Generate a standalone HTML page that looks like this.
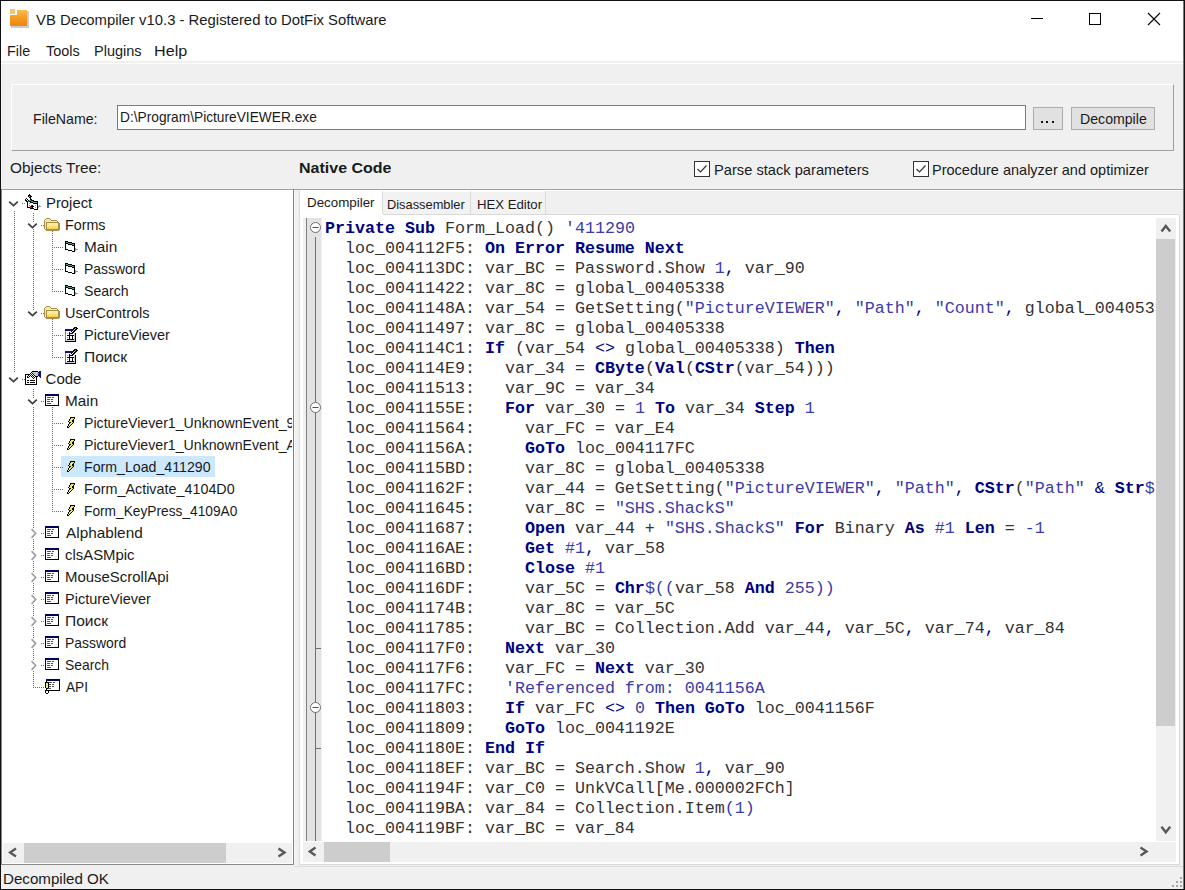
<!DOCTYPE html>
<html><head><meta charset="utf-8">
<style>
html,body{margin:0;padding:0;}
body{width:1185px;height:890px;position:relative;overflow:hidden;background:#f0f0f0;font-family:"Liberation Sans",sans-serif;}
.a{position:absolute;}
.t{position:absolute;white-space:pre;line-height:20px;color:#1a1a1a;transform-origin:0 0;}
#code{position:absolute;font-family:"Liberation Mono",monospace;font-size:16.67px;line-height:20px;white-space:pre;color:#333;}
#code b{color:#000080;}
#code i{font-style:normal;color:#3a3aa8;}
#code u{text-decoration:none;color:#000080;}
</style></head>
<body>
<div class="a" style="left:0;top:0;width:1185px;height:61px;background:#fff"></div>
<div class="a" style="left:0;top:63px;width:1185px;height:1px;background:#fff"></div>
<svg class="a" style="left:9px;top:8px" width="21" height="21" viewBox="0 0 21 21" shape-rendering="crispEdges">
<defs><linearGradient id="og" x1="0" y1="0" x2="0" y2="1"><stop offset="0" stop-color="#fbbd4e"/><stop offset="0.5" stop-color="#f69a22"/><stop offset="1" stop-color="#ee860e"/></linearGradient></defs>
<path d="M18 3 H20 V20 H2 V18 H18 Z" fill="#c9ccd4"/>
<rect x="1" y="1" width="5" height="5" fill="#f8c568"/>
<path d="M8 2 H18 V18 H1 V7 H8 Z" fill="url(#og)"/>
</svg>
<div class="t" style="left:35.70px;top:10px;font-size:15px;transform:scaleX(0.9895);">VB Decompiler v10.3 - Registered to DotFix Software</div>
<div class="a" style="left:1031px;top:18px;width:12px;height:1px;background:#000"></div>
<div class="a" style="left:1089px;top:13px;width:10px;height:10px;border:1px solid #000"></div>
<svg class="a" style="left:1147px;top:12px" width="14" height="14" viewBox="0 0 14 14"><path d="M1 1 L13 13 M13 1 L1 13" stroke="#000" stroke-width="1.1"/></svg>
<div class="t" style="left:7.44px;top:41px;font-size:15px;transform:scaleX(0.9565);">File</div>
<div class="t" style="left:45.60px;top:41px;font-size:15px;transform:scaleX(0.9629);">Tools</div>
<div class="t" style="left:93.53px;top:41px;font-size:15px;transform:scaleX(0.9667);">Plugins</div>
<div class="t" style="left:154.22px;top:41px;font-size:15px;transform:scaleX(1.0759);">Help</div>
<div class="a" style="left:11px;top:84px;width:1163px;height:67px;border-left:1px solid #fff;border-top:1px solid #fff;border-right:1px solid #a0a0a0;border-bottom:1px solid #a0a0a0;box-sizing:border-box"></div>
<div class="t" style="left:32.66px;top:109px;font-size:15px;transform:scaleX(0.9439);">FileName:</div>
<div class="a" style="left:117px;top:105px;width:909px;height:25px;background:#fff;border:1px solid #7a7a7a;box-sizing:border-box"></div>
<div class="t" style="left:119.99px;top:107px;font-size:15px;transform:scaleX(0.9150);">D:\Program\PictureVIEWER.exe</div>
<div class="a" style="left:1033px;top:107px;width:30px;height:23px;background:#e1e1e1;border:1px solid #adadad;box-sizing:border-box"></div>
<div class="a" style="left:1041px;top:121px;width:2px;height:2px;background:#111"></div>
<div class="a" style="left:1046px;top:121px;width:2px;height:2px;background:#111"></div>
<div class="a" style="left:1052px;top:121px;width:2px;height:2px;background:#111"></div>
<div class="a" style="left:1071px;top:107px;width:84px;height:23px;background:#e1e1e1;border:1px solid #adadad;box-sizing:border-box"></div>
<div class="t" style="left:1079.56px;top:109px;font-size:15px;transform:scaleX(0.9420);">Decompile</div>
<div class="t" style="left:10.48px;top:158px;font-size:15px;transform:scaleX(1.0241);">Objects Tree:</div>
<div class="t" style="left:298.53px;top:158px;font-size:15px;font-weight:bold;transform:scaleX(1.0671);">Native Code</div>
<div class="a" style="left:694px;top:161px;width:16px;height:16px;border:1px solid #333;box-sizing:border-box;background:#fff"></div>
<svg class="a" style="left:694px;top:161px" width="16" height="16"><path d="M3.5 8 L6.5 11 L12.5 4.5" stroke="#333" stroke-width="1.2" fill="none"/></svg>
<div class="t" style="left:713.52px;top:160px;font-size:15px;transform:scaleX(0.9777);">Parse stack parameters</div>
<div class="a" style="left:913px;top:161px;width:16px;height:16px;border:1px solid #333;box-sizing:border-box;background:#fff"></div>
<svg class="a" style="left:913px;top:161px" width="16" height="16"><path d="M3.5 8 L6.5 11 L12.5 4.5" stroke="#333" stroke-width="1.2" fill="none"/></svg>
<div class="t" style="left:932.43px;top:160px;font-size:15px;transform:scaleX(0.9668);">Procedure analyzer and optimizer</div>
<div class="a" style="left:1px;top:189px;width:1182px;height:1px;background:#a0a0a0"></div>
<div class="a" style="left:1px;top:190px;width:292px;height:674px;background:#fff"></div>
<div class="a" style="left:1px;top:189px;width:1px;height:676px;background:#858585"></div>
<div class="a" style="left:61px;top:456px;width:154px;height:21px;background:#cce8ff"></div>
<div class="a" style="left:14px;top:211px;width:1px;height:162px;background:repeating-linear-gradient(to bottom,#6a6a6a 0,#6a6a6a 1px,transparent 1px,transparent 2px)"></div>
<div class="a" style="left:33px;top:213px;width:1px;height:9px;background:repeating-linear-gradient(to bottom,#6a6a6a 0,#6a6a6a 1px,transparent 1px,transparent 2px)"></div>
<div class="a" style="left:33px;top:229px;width:1px;height:81px;background:repeating-linear-gradient(to bottom,#6a6a6a 0,#6a6a6a 1px,transparent 1px,transparent 2px)"></div>
<div class="a" style="left:33px;top:389px;width:1px;height:9px;background:repeating-linear-gradient(to bottom,#6a6a6a 0,#6a6a6a 1px,transparent 1px,transparent 2px)"></div>
<div class="a" style="left:33px;top:407px;width:1px;height:121px;background:repeating-linear-gradient(to bottom,#6a6a6a 0,#6a6a6a 1px,transparent 1px,transparent 2px)"></div>
<div class="a" style="left:33px;top:539px;width:1px;height:11px;background:repeating-linear-gradient(to bottom,#6a6a6a 0,#6a6a6a 1px,transparent 1px,transparent 2px)"></div>
<div class="a" style="left:33px;top:561px;width:1px;height:11px;background:repeating-linear-gradient(to bottom,#6a6a6a 0,#6a6a6a 1px,transparent 1px,transparent 2px)"></div>
<div class="a" style="left:33px;top:583px;width:1px;height:11px;background:repeating-linear-gradient(to bottom,#6a6a6a 0,#6a6a6a 1px,transparent 1px,transparent 2px)"></div>
<div class="a" style="left:33px;top:605px;width:1px;height:11px;background:repeating-linear-gradient(to bottom,#6a6a6a 0,#6a6a6a 1px,transparent 1px,transparent 2px)"></div>
<div class="a" style="left:33px;top:627px;width:1px;height:11px;background:repeating-linear-gradient(to bottom,#6a6a6a 0,#6a6a6a 1px,transparent 1px,transparent 2px)"></div>
<div class="a" style="left:33px;top:649px;width:1px;height:11px;background:repeating-linear-gradient(to bottom,#6a6a6a 0,#6a6a6a 1px,transparent 1px,transparent 2px)"></div>
<div class="a" style="left:33px;top:671px;width:1px;height:17px;background:repeating-linear-gradient(to bottom,#6a6a6a 0,#6a6a6a 1px,transparent 1px,transparent 2px)"></div>
<div class="a" style="left:52px;top:231px;width:1px;height:61px;background:repeating-linear-gradient(to bottom,#6a6a6a 0,#6a6a6a 1px,transparent 1px,transparent 2px)"></div>
<div class="a" style="left:52px;top:319px;width:1px;height:39px;background:repeating-linear-gradient(to bottom,#6a6a6a 0,#6a6a6a 1px,transparent 1px,transparent 2px)"></div>
<div class="a" style="left:52px;top:407px;width:1px;height:105px;background:repeating-linear-gradient(to bottom,#6a6a6a 0,#6a6a6a 1px,transparent 1px,transparent 2px)"></div>
<div class="a" style="left:22px;top:203px;height:1px;width:3px;background:repeating-linear-gradient(to right,#6a6a6a 0,#6a6a6a 1px,transparent 1px,transparent 2px)"></div>
<svg class="a" style="left:8px;top:200px" width="11" height="8"><path d="M1.2 1.6 L5.5 5.6 L9.8 1.6" stroke="#3c3c3c" stroke-width="1.7" fill="none"/></svg>
<svg class="a" style="left:24px;top:194px" width="17" height="16" shape-rendering="crispEdges"><rect x="5" y="0" width="1" height="1" fill="#000"/><rect x="4" y="1" width="3" height="1" fill="#000"/><rect x="4" y="2" width="1" height="1" fill="#000"/><rect x="5" y="2" width="1" height="1" fill="#5ab0b0"/><rect x="6" y="2" width="2" height="1" fill="#000"/><rect x="5" y="3" width="2" height="1" fill="#000"/><rect x="2" y="4" width="1" height="1" fill="#000"/><rect x="6" y="4" width="1" height="1" fill="#000"/><rect x="1" y="5" width="1" height="1" fill="#000"/><rect x="2" y="5" width="1" height="1" fill="#fff"/><rect x="3" y="5" width="1" height="1" fill="#000"/><rect x="6" y="5" width="2" height="1" fill="#000"/><rect x="1" y="6" width="2" height="1" fill="#000"/><rect x="3" y="6" width="1" height="1" fill="#fff"/><rect x="4" y="6" width="1" height="1" fill="#000"/><rect x="5" y="6" width="2" height="1" fill="#5ab0b0"/><rect x="7" y="6" width="3" height="1" fill="#000"/><rect x="2" y="7" width="2" height="1" fill="#000"/><rect x="4" y="7" width="1" height="1" fill="#5ab0b0"/><rect x="5" y="7" width="2" height="1" fill="#000"/><rect x="7" y="7" width="2" height="1" fill="#5ab0b0"/><rect x="9" y="7" width="5" height="1" fill="#000"/><rect x="3" y="8" width="1" height="1" fill="#000"/><rect x="4" y="8" width="2" height="1" fill="#fff"/><rect x="6" y="8" width="3" height="1" fill="#000"/><rect x="9" y="8" width="4" height="1" fill="#5ab0b0"/><rect x="13" y="8" width="1" height="1" fill="#000"/><rect x="0" y="9" width="1" height="1" fill="#8a9a9a"/><rect x="3" y="9" width="1" height="1" fill="#000"/><rect x="4" y="9" width="1" height="1" fill="#fff"/><rect x="5" y="9" width="1" height="1" fill="#8a9a9a"/><rect x="6" y="9" width="3" height="1" fill="#fff"/><rect x="9" y="9" width="5" height="1" fill="#000"/><rect x="3" y="10" width="1" height="1" fill="#000"/><rect x="4" y="10" width="9" height="1" fill="#fff"/><rect x="13" y="10" width="1" height="1" fill="#000"/><rect x="3" y="11" width="1" height="1" fill="#000"/><rect x="4" y="11" width="1" height="1" fill="#fff"/><rect x="5" y="11" width="1" height="1" fill="#8a9a9a"/><rect x="6" y="11" width="1" height="1" fill="#fff"/><rect x="7" y="11" width="1" height="1" fill="#a01828"/><rect x="8" y="11" width="1" height="1" fill="#000"/><rect x="9" y="11" width="2" height="1" fill="#fff"/><rect x="11" y="11" width="1" height="1" fill="#8a9a9a"/><rect x="12" y="11" width="1" height="1" fill="#fff"/><rect x="13" y="11" width="1" height="1" fill="#000"/><rect x="15" y="11" width="1" height="1" fill="#8a9a9a"/><rect x="3" y="12" width="1" height="1" fill="#000"/><rect x="4" y="12" width="2" height="1" fill="#fff"/><rect x="6" y="12" width="1" height="1" fill="#a01828"/><rect x="7" y="12" width="3" height="1" fill="#000"/><rect x="10" y="12" width="3" height="1" fill="#fff"/><rect x="13" y="12" width="1" height="1" fill="#000"/><rect x="14" y="12" width="3" height="1" fill="#8a9a9a"/><rect x="3" y="13" width="3" height="1" fill="#000"/><rect x="6" y="13" width="2" height="1" fill="#a01828"/><rect x="8" y="13" width="1" height="1" fill="#000"/><rect x="9" y="13" width="2" height="1" fill="#fff"/><rect x="11" y="13" width="1" height="1" fill="#8a9a9a"/><rect x="12" y="13" width="1" height="1" fill="#fff"/><rect x="13" y="13" width="1" height="1" fill="#000"/><rect x="14" y="13" width="1" height="1" fill="#8a9a9a"/><rect x="6" y="14" width="4" height="1" fill="#000"/><rect x="10" y="14" width="3" height="1" fill="#fff"/><rect x="13" y="14" width="1" height="1" fill="#000"/><rect x="10" y="15" width="4" height="1" fill="#000"/></svg>
<div class="t" style="left:45.51px;top:193px;font-size:15px;transform:scaleX(0.9891);">Project</div>
<div class="a" style="left:41px;top:225px;height:1px;width:3px;background:repeating-linear-gradient(to right,#6a6a6a 0,#6a6a6a 1px,transparent 1px,transparent 2px)"></div>
<svg class="a" style="left:27px;top:222px" width="11" height="8"><path d="M1.2 1.6 L5.5 5.6 L9.8 1.6" stroke="#3c3c3c" stroke-width="1.7" fill="none"/></svg>
<svg class="a" style="left:44px;top:218px" width="16" height="13" shape-rendering="crispEdges"><rect x="2" y="0" width="4" height="1" fill="#a89050"/><rect x="1" y="1" width="1" height="1" fill="#a89050"/><rect x="2" y="1" width="4" height="1" fill="#f7e7a0"/><rect x="6" y="1" width="1" height="1" fill="#a89050"/><rect x="0" y="2" width="1" height="1" fill="#a89050"/><rect x="1" y="2" width="6" height="1" fill="#f7e7a0"/><rect x="7" y="2" width="6" height="1" fill="#a89050"/><rect x="0" y="3" width="1" height="1" fill="#a89050"/><rect x="1" y="3" width="12" height="1" fill="#f7e7a0"/><rect x="13" y="3" width="1" height="1" fill="#a89050"/><rect x="0" y="4" width="1" height="1" fill="#a89050"/><rect x="1" y="4" width="1" height="1" fill="#f7e7a0"/><rect x="2" y="4" width="13" height="1" fill="#a89050"/><rect x="0" y="5" width="1" height="1" fill="#a89050"/><rect x="1" y="5" width="1" height="1" fill="#f7e7a0"/><rect x="2" y="5" width="1" height="1" fill="#a89050"/><rect x="3" y="5" width="11" height="1" fill="#fcec98"/><rect x="14" y="5" width="2" height="1" fill="#a89050"/><rect x="0" y="6" width="1" height="1" fill="#a89050"/><rect x="1" y="6" width="1" height="1" fill="#f7e7a0"/><rect x="2" y="6" width="1" height="1" fill="#a89050"/><rect x="3" y="6" width="11" height="1" fill="#fcec98"/><rect x="14" y="6" width="2" height="1" fill="#a89050"/><rect x="0" y="7" width="1" height="1" fill="#a89050"/><rect x="1" y="7" width="1" height="1" fill="#f7e7a0"/><rect x="2" y="7" width="1" height="1" fill="#a89050"/><rect x="3" y="7" width="11" height="1" fill="#fcec98"/><rect x="14" y="7" width="2" height="1" fill="#a89050"/><rect x="0" y="8" width="1" height="1" fill="#a89050"/><rect x="1" y="8" width="1" height="1" fill="#f7e7a0"/><rect x="2" y="8" width="1" height="1" fill="#a89050"/><rect x="3" y="8" width="11" height="1" fill="#f8de70"/><rect x="14" y="8" width="2" height="1" fill="#a89050"/><rect x="0" y="9" width="1" height="1" fill="#a89050"/><rect x="1" y="9" width="1" height="1" fill="#f7e7a0"/><rect x="2" y="9" width="1" height="1" fill="#a89050"/><rect x="3" y="9" width="11" height="1" fill="#f8de70"/><rect x="14" y="9" width="2" height="1" fill="#a89050"/><rect x="0" y="10" width="1" height="1" fill="#a89050"/><rect x="1" y="10" width="1" height="1" fill="#f7e7a0"/><rect x="2" y="10" width="1" height="1" fill="#a89050"/><rect x="3" y="10" width="11" height="1" fill="#f0cc50"/><rect x="14" y="10" width="2" height="1" fill="#a89050"/><rect x="1" y="11" width="15" height="1" fill="#a89050"/><rect x="2" y="12" width="13" height="1" fill="#a89050"/></svg>
<div class="t" style="left:64.75px;top:215px;font-size:15px;transform:scaleX(0.9537);">Forms</div>
<div class="a" style="left:54px;top:247px;height:1px;width:9px;background:repeating-linear-gradient(to right,#6a6a6a 0,#6a6a6a 1px,transparent 1px,transparent 2px)"></div>
<svg class="a" style="left:65px;top:241px" width="13" height="11" shape-rendering="crispEdges"><rect x="0" y="0" width="3" height="1" fill="#000"/><rect x="0" y="1" width="1" height="1" fill="#000"/><rect x="1" y="1" width="2" height="1" fill="#4a9a9a"/><rect x="3" y="1" width="4" height="1" fill="#000"/><rect x="0" y="2" width="3" height="1" fill="#000"/><rect x="3" y="2" width="4" height="1" fill="#4a9a9a"/><rect x="7" y="2" width="3" height="1" fill="#000"/><rect x="0" y="3" width="1" height="1" fill="#000"/><rect x="1" y="3" width="2" height="1" fill="#fff"/><rect x="3" y="3" width="4" height="1" fill="#000"/><rect x="7" y="3" width="2" height="1" fill="#4a9a9a"/><rect x="9" y="3" width="1" height="1" fill="#000"/><rect x="0" y="4" width="1" height="1" fill="#000"/><rect x="1" y="4" width="6" height="1" fill="#fff"/><rect x="7" y="4" width="3" height="1" fill="#000"/><rect x="0" y="5" width="1" height="1" fill="#000"/><rect x="1" y="5" width="8" height="1" fill="#fff"/><rect x="9" y="5" width="1" height="1" fill="#000"/><rect x="0" y="6" width="1" height="1" fill="#000"/><rect x="1" y="6" width="8" height="1" fill="#fff"/><rect x="9" y="6" width="1" height="1" fill="#000"/><rect x="0" y="7" width="1" height="1" fill="#000"/><rect x="1" y="7" width="8" height="1" fill="#fff"/><rect x="9" y="7" width="1" height="1" fill="#000"/><rect x="10" y="7" width="1" height="1" fill="#8a9a9a"/><rect x="0" y="8" width="3" height="1" fill="#000"/><rect x="3" y="8" width="6" height="1" fill="#fff"/><rect x="9" y="8" width="1" height="1" fill="#000"/><rect x="10" y="8" width="3" height="1" fill="#8a9a9a"/><rect x="3" y="9" width="4" height="1" fill="#000"/><rect x="7" y="9" width="2" height="1" fill="#fff"/><rect x="9" y="9" width="1" height="1" fill="#000"/><rect x="10" y="9" width="1" height="1" fill="#8a9a9a"/><rect x="7" y="10" width="3" height="1" fill="#000"/></svg>
<div class="t" style="left:83.58px;top:237px;font-size:15px;transform:scaleX(1.0226);">Main</div>
<div class="a" style="left:54px;top:269px;height:1px;width:9px;background:repeating-linear-gradient(to right,#6a6a6a 0,#6a6a6a 1px,transparent 1px,transparent 2px)"></div>
<svg class="a" style="left:65px;top:263px" width="13" height="11" shape-rendering="crispEdges"><rect x="0" y="0" width="3" height="1" fill="#000"/><rect x="0" y="1" width="1" height="1" fill="#000"/><rect x="1" y="1" width="2" height="1" fill="#4a9a9a"/><rect x="3" y="1" width="4" height="1" fill="#000"/><rect x="0" y="2" width="3" height="1" fill="#000"/><rect x="3" y="2" width="4" height="1" fill="#4a9a9a"/><rect x="7" y="2" width="3" height="1" fill="#000"/><rect x="0" y="3" width="1" height="1" fill="#000"/><rect x="1" y="3" width="2" height="1" fill="#fff"/><rect x="3" y="3" width="4" height="1" fill="#000"/><rect x="7" y="3" width="2" height="1" fill="#4a9a9a"/><rect x="9" y="3" width="1" height="1" fill="#000"/><rect x="0" y="4" width="1" height="1" fill="#000"/><rect x="1" y="4" width="6" height="1" fill="#fff"/><rect x="7" y="4" width="3" height="1" fill="#000"/><rect x="0" y="5" width="1" height="1" fill="#000"/><rect x="1" y="5" width="8" height="1" fill="#fff"/><rect x="9" y="5" width="1" height="1" fill="#000"/><rect x="0" y="6" width="1" height="1" fill="#000"/><rect x="1" y="6" width="8" height="1" fill="#fff"/><rect x="9" y="6" width="1" height="1" fill="#000"/><rect x="0" y="7" width="1" height="1" fill="#000"/><rect x="1" y="7" width="8" height="1" fill="#fff"/><rect x="9" y="7" width="1" height="1" fill="#000"/><rect x="10" y="7" width="1" height="1" fill="#8a9a9a"/><rect x="0" y="8" width="3" height="1" fill="#000"/><rect x="3" y="8" width="6" height="1" fill="#fff"/><rect x="9" y="8" width="1" height="1" fill="#000"/><rect x="10" y="8" width="3" height="1" fill="#8a9a9a"/><rect x="3" y="9" width="4" height="1" fill="#000"/><rect x="7" y="9" width="2" height="1" fill="#fff"/><rect x="9" y="9" width="1" height="1" fill="#000"/><rect x="10" y="9" width="1" height="1" fill="#8a9a9a"/><rect x="7" y="10" width="3" height="1" fill="#000"/></svg>
<div class="t" style="left:83.67px;top:259px;font-size:15px;transform:scaleX(0.9281);">Password</div>
<div class="a" style="left:54px;top:291px;height:1px;width:9px;background:repeating-linear-gradient(to right,#6a6a6a 0,#6a6a6a 1px,transparent 1px,transparent 2px)"></div>
<svg class="a" style="left:65px;top:285px" width="13" height="11" shape-rendering="crispEdges"><rect x="0" y="0" width="3" height="1" fill="#000"/><rect x="0" y="1" width="1" height="1" fill="#000"/><rect x="1" y="1" width="2" height="1" fill="#4a9a9a"/><rect x="3" y="1" width="4" height="1" fill="#000"/><rect x="0" y="2" width="3" height="1" fill="#000"/><rect x="3" y="2" width="4" height="1" fill="#4a9a9a"/><rect x="7" y="2" width="3" height="1" fill="#000"/><rect x="0" y="3" width="1" height="1" fill="#000"/><rect x="1" y="3" width="2" height="1" fill="#fff"/><rect x="3" y="3" width="4" height="1" fill="#000"/><rect x="7" y="3" width="2" height="1" fill="#4a9a9a"/><rect x="9" y="3" width="1" height="1" fill="#000"/><rect x="0" y="4" width="1" height="1" fill="#000"/><rect x="1" y="4" width="6" height="1" fill="#fff"/><rect x="7" y="4" width="3" height="1" fill="#000"/><rect x="0" y="5" width="1" height="1" fill="#000"/><rect x="1" y="5" width="8" height="1" fill="#fff"/><rect x="9" y="5" width="1" height="1" fill="#000"/><rect x="0" y="6" width="1" height="1" fill="#000"/><rect x="1" y="6" width="8" height="1" fill="#fff"/><rect x="9" y="6" width="1" height="1" fill="#000"/><rect x="0" y="7" width="1" height="1" fill="#000"/><rect x="1" y="7" width="8" height="1" fill="#fff"/><rect x="9" y="7" width="1" height="1" fill="#000"/><rect x="10" y="7" width="1" height="1" fill="#8a9a9a"/><rect x="0" y="8" width="3" height="1" fill="#000"/><rect x="3" y="8" width="6" height="1" fill="#fff"/><rect x="9" y="8" width="1" height="1" fill="#000"/><rect x="10" y="8" width="3" height="1" fill="#8a9a9a"/><rect x="3" y="9" width="4" height="1" fill="#000"/><rect x="7" y="9" width="2" height="1" fill="#fff"/><rect x="9" y="9" width="1" height="1" fill="#000"/><rect x="10" y="9" width="1" height="1" fill="#8a9a9a"/><rect x="7" y="10" width="3" height="1" fill="#000"/></svg>
<div class="t" style="left:83.66px;top:281px;font-size:15px;transform:scaleX(0.9391);">Search</div>
<div class="a" style="left:41px;top:313px;height:1px;width:3px;background:repeating-linear-gradient(to right,#6a6a6a 0,#6a6a6a 1px,transparent 1px,transparent 2px)"></div>
<svg class="a" style="left:27px;top:310px" width="11" height="8"><path d="M1.2 1.6 L5.5 5.6 L9.8 1.6" stroke="#3c3c3c" stroke-width="1.7" fill="none"/></svg>
<svg class="a" style="left:44px;top:306px" width="16" height="13" shape-rendering="crispEdges"><rect x="2" y="0" width="4" height="1" fill="#a89050"/><rect x="1" y="1" width="1" height="1" fill="#a89050"/><rect x="2" y="1" width="4" height="1" fill="#f7e7a0"/><rect x="6" y="1" width="1" height="1" fill="#a89050"/><rect x="0" y="2" width="1" height="1" fill="#a89050"/><rect x="1" y="2" width="6" height="1" fill="#f7e7a0"/><rect x="7" y="2" width="6" height="1" fill="#a89050"/><rect x="0" y="3" width="1" height="1" fill="#a89050"/><rect x="1" y="3" width="12" height="1" fill="#f7e7a0"/><rect x="13" y="3" width="1" height="1" fill="#a89050"/><rect x="0" y="4" width="1" height="1" fill="#a89050"/><rect x="1" y="4" width="1" height="1" fill="#f7e7a0"/><rect x="2" y="4" width="13" height="1" fill="#a89050"/><rect x="0" y="5" width="1" height="1" fill="#a89050"/><rect x="1" y="5" width="1" height="1" fill="#f7e7a0"/><rect x="2" y="5" width="1" height="1" fill="#a89050"/><rect x="3" y="5" width="11" height="1" fill="#fcec98"/><rect x="14" y="5" width="2" height="1" fill="#a89050"/><rect x="0" y="6" width="1" height="1" fill="#a89050"/><rect x="1" y="6" width="1" height="1" fill="#f7e7a0"/><rect x="2" y="6" width="1" height="1" fill="#a89050"/><rect x="3" y="6" width="11" height="1" fill="#fcec98"/><rect x="14" y="6" width="2" height="1" fill="#a89050"/><rect x="0" y="7" width="1" height="1" fill="#a89050"/><rect x="1" y="7" width="1" height="1" fill="#f7e7a0"/><rect x="2" y="7" width="1" height="1" fill="#a89050"/><rect x="3" y="7" width="11" height="1" fill="#fcec98"/><rect x="14" y="7" width="2" height="1" fill="#a89050"/><rect x="0" y="8" width="1" height="1" fill="#a89050"/><rect x="1" y="8" width="1" height="1" fill="#f7e7a0"/><rect x="2" y="8" width="1" height="1" fill="#a89050"/><rect x="3" y="8" width="11" height="1" fill="#f8de70"/><rect x="14" y="8" width="2" height="1" fill="#a89050"/><rect x="0" y="9" width="1" height="1" fill="#a89050"/><rect x="1" y="9" width="1" height="1" fill="#f7e7a0"/><rect x="2" y="9" width="1" height="1" fill="#a89050"/><rect x="3" y="9" width="11" height="1" fill="#f8de70"/><rect x="14" y="9" width="2" height="1" fill="#a89050"/><rect x="0" y="10" width="1" height="1" fill="#a89050"/><rect x="1" y="10" width="1" height="1" fill="#f7e7a0"/><rect x="2" y="10" width="1" height="1" fill="#a89050"/><rect x="3" y="10" width="11" height="1" fill="#f0cc50"/><rect x="14" y="10" width="2" height="1" fill="#a89050"/><rect x="1" y="11" width="15" height="1" fill="#a89050"/><rect x="2" y="12" width="13" height="1" fill="#a89050"/></svg>
<div class="t" style="left:64.73px;top:303px;font-size:15px;transform:scaleX(0.9651);">UserControls</div>
<div class="a" style="left:54px;top:335px;height:1px;width:9px;background:repeating-linear-gradient(to right,#6a6a6a 0,#6a6a6a 1px,transparent 1px,transparent 2px)"></div>
<svg class="a" style="left:65px;top:327px" width="13" height="15" shape-rendering="crispEdges"><rect x="9" y="0" width="3" height="1" fill="#000"/><rect x="8" y="1" width="2" height="1" fill="#000"/><rect x="10" y="1" width="1" height="1" fill="#999"/><rect x="11" y="1" width="2" height="1" fill="#000"/><rect x="0" y="2" width="8" height="1" fill="#10107a"/><rect x="8" y="2" width="1" height="1" fill="#000"/><rect x="9" y="2" width="1" height="1" fill="#e8e890"/><rect x="10" y="2" width="2" height="1" fill="#000"/><rect x="0" y="3" width="7" height="1" fill="#10107a"/><rect x="7" y="3" width="1" height="1" fill="#000"/><rect x="8" y="3" width="1" height="1" fill="#e8e890"/><rect x="9" y="3" width="2" height="1" fill="#000"/><rect x="0" y="4" width="1" height="1" fill="#7a7a9a"/><rect x="1" y="4" width="5" height="1" fill="#fff"/><rect x="6" y="4" width="1" height="1" fill="#000"/><rect x="7" y="4" width="1" height="1" fill="#e8e890"/><rect x="8" y="4" width="2" height="1" fill="#000"/><rect x="0" y="5" width="1" height="1" fill="#7a7a9a"/><rect x="1" y="5" width="3" height="1" fill="#fff"/><rect x="4" y="5" width="1" height="1" fill="#000"/><rect x="5" y="5" width="1" height="1" fill="#fff"/><rect x="6" y="5" width="1" height="1" fill="#e8e890"/><rect x="7" y="5" width="2" height="1" fill="#000"/><rect x="9" y="5" width="1" height="1" fill="#fff"/><rect x="0" y="6" width="1" height="1" fill="#7a7a9a"/><rect x="1" y="6" width="1" height="1" fill="#fff"/><rect x="2" y="6" width="1" height="1" fill="#999"/><rect x="3" y="6" width="1" height="1" fill="#fff"/><rect x="4" y="6" width="4" height="1" fill="#000"/><rect x="8" y="6" width="1" height="1" fill="#fff"/><rect x="9" y="6" width="1" height="1" fill="#d0d0d8"/><rect x="10" y="6" width="1" height="1" fill="#000"/><rect x="0" y="7" width="1" height="1" fill="#7a7a9a"/><rect x="1" y="7" width="3" height="1" fill="#fff"/><rect x="4" y="7" width="1" height="1" fill="#000"/><rect x="5" y="7" width="4" height="1" fill="#fff"/><rect x="9" y="7" width="1" height="1" fill="#d0d0d8"/><rect x="10" y="7" width="1" height="1" fill="#000"/><rect x="0" y="8" width="1" height="1" fill="#7a7a9a"/><rect x="1" y="8" width="1" height="1" fill="#fff"/><rect x="2" y="8" width="7" height="1" fill="#000"/><rect x="9" y="8" width="1" height="1" fill="#d0d0d8"/><rect x="10" y="8" width="1" height="1" fill="#000"/><rect x="0" y="9" width="1" height="1" fill="#7a7a9a"/><rect x="1" y="9" width="3" height="1" fill="#fff"/><rect x="4" y="9" width="1" height="1" fill="#000"/><rect x="5" y="9" width="2" height="1" fill="#fff"/><rect x="7" y="9" width="1" height="1" fill="#000"/><rect x="8" y="9" width="1" height="1" fill="#fff"/><rect x="9" y="9" width="1" height="1" fill="#d0d0d8"/><rect x="10" y="9" width="1" height="1" fill="#000"/><rect x="0" y="10" width="1" height="1" fill="#7a7a9a"/><rect x="1" y="10" width="1" height="1" fill="#fff"/><rect x="2" y="10" width="1" height="1" fill="#999"/><rect x="3" y="10" width="1" height="1" fill="#fff"/><rect x="4" y="10" width="1" height="1" fill="#000"/><rect x="5" y="10" width="2" height="1" fill="#fff"/><rect x="7" y="10" width="1" height="1" fill="#000"/><rect x="8" y="10" width="1" height="1" fill="#fff"/><rect x="9" y="10" width="1" height="1" fill="#d0d0d8"/><rect x="10" y="10" width="1" height="1" fill="#000"/><rect x="0" y="11" width="1" height="1" fill="#7a7a9a"/><rect x="1" y="11" width="3" height="1" fill="#fff"/><rect x="4" y="11" width="1" height="1" fill="#000"/><rect x="5" y="11" width="2" height="1" fill="#fff"/><rect x="7" y="11" width="1" height="1" fill="#000"/><rect x="8" y="11" width="1" height="1" fill="#fff"/><rect x="9" y="11" width="1" height="1" fill="#d0d0d8"/><rect x="10" y="11" width="1" height="1" fill="#000"/><rect x="0" y="12" width="1" height="1" fill="#7a7a9a"/><rect x="1" y="12" width="1" height="1" fill="#fff"/><rect x="2" y="12" width="7" height="1" fill="#000"/><rect x="9" y="12" width="1" height="1" fill="#d0d0d8"/><rect x="10" y="12" width="1" height="1" fill="#000"/><rect x="0" y="13" width="1" height="1" fill="#7a7a9a"/><rect x="1" y="13" width="9" height="1" fill="#d0d0d8"/><rect x="10" y="13" width="1" height="1" fill="#000"/><rect x="0" y="14" width="11" height="1" fill="#000"/></svg>
<div class="t" style="left:83.63px;top:325px;font-size:15px;transform:scaleX(0.9659);">PictureViever</div>
<div class="a" style="left:54px;top:357px;height:1px;width:9px;background:repeating-linear-gradient(to right,#6a6a6a 0,#6a6a6a 1px,transparent 1px,transparent 2px)"></div>
<svg class="a" style="left:65px;top:349px" width="13" height="15" shape-rendering="crispEdges"><rect x="9" y="0" width="3" height="1" fill="#000"/><rect x="8" y="1" width="2" height="1" fill="#000"/><rect x="10" y="1" width="1" height="1" fill="#999"/><rect x="11" y="1" width="2" height="1" fill="#000"/><rect x="0" y="2" width="8" height="1" fill="#10107a"/><rect x="8" y="2" width="1" height="1" fill="#000"/><rect x="9" y="2" width="1" height="1" fill="#e8e890"/><rect x="10" y="2" width="2" height="1" fill="#000"/><rect x="0" y="3" width="7" height="1" fill="#10107a"/><rect x="7" y="3" width="1" height="1" fill="#000"/><rect x="8" y="3" width="1" height="1" fill="#e8e890"/><rect x="9" y="3" width="2" height="1" fill="#000"/><rect x="0" y="4" width="1" height="1" fill="#7a7a9a"/><rect x="1" y="4" width="5" height="1" fill="#fff"/><rect x="6" y="4" width="1" height="1" fill="#000"/><rect x="7" y="4" width="1" height="1" fill="#e8e890"/><rect x="8" y="4" width="2" height="1" fill="#000"/><rect x="0" y="5" width="1" height="1" fill="#7a7a9a"/><rect x="1" y="5" width="3" height="1" fill="#fff"/><rect x="4" y="5" width="1" height="1" fill="#000"/><rect x="5" y="5" width="1" height="1" fill="#fff"/><rect x="6" y="5" width="1" height="1" fill="#e8e890"/><rect x="7" y="5" width="2" height="1" fill="#000"/><rect x="9" y="5" width="1" height="1" fill="#fff"/><rect x="0" y="6" width="1" height="1" fill="#7a7a9a"/><rect x="1" y="6" width="1" height="1" fill="#fff"/><rect x="2" y="6" width="1" height="1" fill="#999"/><rect x="3" y="6" width="1" height="1" fill="#fff"/><rect x="4" y="6" width="4" height="1" fill="#000"/><rect x="8" y="6" width="1" height="1" fill="#fff"/><rect x="9" y="6" width="1" height="1" fill="#d0d0d8"/><rect x="10" y="6" width="1" height="1" fill="#000"/><rect x="0" y="7" width="1" height="1" fill="#7a7a9a"/><rect x="1" y="7" width="3" height="1" fill="#fff"/><rect x="4" y="7" width="1" height="1" fill="#000"/><rect x="5" y="7" width="4" height="1" fill="#fff"/><rect x="9" y="7" width="1" height="1" fill="#d0d0d8"/><rect x="10" y="7" width="1" height="1" fill="#000"/><rect x="0" y="8" width="1" height="1" fill="#7a7a9a"/><rect x="1" y="8" width="1" height="1" fill="#fff"/><rect x="2" y="8" width="7" height="1" fill="#000"/><rect x="9" y="8" width="1" height="1" fill="#d0d0d8"/><rect x="10" y="8" width="1" height="1" fill="#000"/><rect x="0" y="9" width="1" height="1" fill="#7a7a9a"/><rect x="1" y="9" width="3" height="1" fill="#fff"/><rect x="4" y="9" width="1" height="1" fill="#000"/><rect x="5" y="9" width="2" height="1" fill="#fff"/><rect x="7" y="9" width="1" height="1" fill="#000"/><rect x="8" y="9" width="1" height="1" fill="#fff"/><rect x="9" y="9" width="1" height="1" fill="#d0d0d8"/><rect x="10" y="9" width="1" height="1" fill="#000"/><rect x="0" y="10" width="1" height="1" fill="#7a7a9a"/><rect x="1" y="10" width="1" height="1" fill="#fff"/><rect x="2" y="10" width="1" height="1" fill="#999"/><rect x="3" y="10" width="1" height="1" fill="#fff"/><rect x="4" y="10" width="1" height="1" fill="#000"/><rect x="5" y="10" width="2" height="1" fill="#fff"/><rect x="7" y="10" width="1" height="1" fill="#000"/><rect x="8" y="10" width="1" height="1" fill="#fff"/><rect x="9" y="10" width="1" height="1" fill="#d0d0d8"/><rect x="10" y="10" width="1" height="1" fill="#000"/><rect x="0" y="11" width="1" height="1" fill="#7a7a9a"/><rect x="1" y="11" width="3" height="1" fill="#fff"/><rect x="4" y="11" width="1" height="1" fill="#000"/><rect x="5" y="11" width="2" height="1" fill="#fff"/><rect x="7" y="11" width="1" height="1" fill="#000"/><rect x="8" y="11" width="1" height="1" fill="#fff"/><rect x="9" y="11" width="1" height="1" fill="#d0d0d8"/><rect x="10" y="11" width="1" height="1" fill="#000"/><rect x="0" y="12" width="1" height="1" fill="#7a7a9a"/><rect x="1" y="12" width="1" height="1" fill="#fff"/><rect x="2" y="12" width="7" height="1" fill="#000"/><rect x="9" y="12" width="1" height="1" fill="#d0d0d8"/><rect x="10" y="12" width="1" height="1" fill="#000"/><rect x="0" y="13" width="1" height="1" fill="#7a7a9a"/><rect x="1" y="13" width="9" height="1" fill="#d0d0d8"/><rect x="10" y="13" width="1" height="1" fill="#000"/><rect x="0" y="14" width="11" height="1" fill="#000"/></svg>
<div class="t" style="left:83.56px;top:347px;font-size:15px;transform:scaleX(1.0366);">Поиск</div>
<div class="a" style="left:22px;top:379px;height:1px;width:3px;background:repeating-linear-gradient(to right,#6a6a6a 0,#6a6a6a 1px,transparent 1px,transparent 2px)"></div>
<svg class="a" style="left:8px;top:376px" width="11" height="8"><path d="M1.2 1.6 L5.5 5.6 L9.8 1.6" stroke="#3c3c3c" stroke-width="1.7" fill="none"/></svg>
<svg class="a" style="left:25px;top:371px" width="16" height="14" shape-rendering="crispEdges"><rect x="7" y="0" width="6" height="1" fill="#000"/><rect x="14" y="0" width="2" height="1" fill="#10106a"/><rect x="6" y="1" width="1" height="1" fill="#000"/><rect x="7" y="1" width="6" height="1" fill="#c4c8c4"/><rect x="13" y="1" width="3" height="1" fill="#10106a"/><rect x="5" y="2" width="1" height="1" fill="#000"/><rect x="6" y="2" width="1" height="1" fill="#fff"/><rect x="7" y="2" width="1" height="1" fill="#000"/><rect x="8" y="2" width="5" height="1" fill="#c4c8c4"/><rect x="13" y="2" width="1" height="1" fill="#7070b0"/><rect x="14" y="2" width="2" height="1" fill="#10106a"/><rect x="0" y="3" width="5" height="1" fill="#000"/><rect x="5" y="3" width="1" height="1" fill="#fff"/><rect x="6" y="3" width="1" height="1" fill="#000"/><rect x="7" y="3" width="1" height="1" fill="#fff"/><rect x="8" y="3" width="1" height="1" fill="#000"/><rect x="9" y="3" width="4" height="1" fill="#c4c8c4"/><rect x="13" y="3" width="3" height="1" fill="#10106a"/><rect x="0" y="4" width="1" height="1" fill="#000"/><rect x="1" y="4" width="2" height="1" fill="#fff"/><rect x="3" y="4" width="1" height="1" fill="#000"/><rect x="4" y="4" width="1" height="1" fill="#fff"/><rect x="5" y="4" width="1" height="1" fill="#000"/><rect x="6" y="4" width="1" height="1" fill="#fff"/><rect x="7" y="4" width="1" height="1" fill="#000"/><rect x="8" y="4" width="1" height="1" fill="#fff"/><rect x="9" y="4" width="1" height="1" fill="#000"/><rect x="10" y="4" width="3" height="1" fill="#c4c8c4"/><rect x="13" y="4" width="3" height="1" fill="#10106a"/><rect x="0" y="5" width="1" height="1" fill="#000"/><rect x="1" y="5" width="1" height="1" fill="#fff"/><rect x="2" y="5" width="1" height="1" fill="#000"/><rect x="3" y="5" width="1" height="1" fill="#fff"/><rect x="4" y="5" width="1" height="1" fill="#000"/><rect x="5" y="5" width="1" height="1" fill="#fff"/><rect x="6" y="5" width="1" height="1" fill="#000"/><rect x="7" y="5" width="1" height="1" fill="#fff"/><rect x="8" y="5" width="1" height="1" fill="#000"/><rect x="9" y="5" width="1" height="1" fill="#fff"/><rect x="10" y="5" width="3" height="1" fill="#000"/><rect x="14" y="5" width="2" height="1" fill="#10106a"/><rect x="0" y="6" width="1" height="1" fill="#000"/><rect x="1" y="6" width="1" height="1" fill="#fff"/><rect x="2" y="6" width="2" height="1" fill="#000"/><rect x="4" y="6" width="3" height="1" fill="#fff"/><rect x="7" y="6" width="1" height="1" fill="#000"/><rect x="8" y="6" width="1" height="1" fill="#fff"/><rect x="9" y="6" width="1" height="1" fill="#000"/><rect x="10" y="6" width="1" height="1" fill="#fff"/><rect x="11" y="6" width="1" height="1" fill="#000"/><rect x="15" y="6" width="1" height="1" fill="#10106a"/><rect x="0" y="7" width="1" height="1" fill="#000"/><rect x="1" y="7" width="7" height="1" fill="#fff"/><rect x="8" y="7" width="1" height="1" fill="#000"/><rect x="9" y="7" width="2" height="1" fill="#fff"/><rect x="11" y="7" width="1" height="1" fill="#000"/><rect x="0" y="8" width="1" height="1" fill="#000"/><rect x="1" y="8" width="10" height="1" fill="#fff"/><rect x="11" y="8" width="1" height="1" fill="#000"/><rect x="0" y="9" width="1" height="1" fill="#000"/><rect x="1" y="9" width="1" height="1" fill="#fff"/><rect x="2" y="9" width="2" height="1" fill="#000"/><rect x="4" y="9" width="1" height="1" fill="#fff"/><rect x="5" y="9" width="5" height="1" fill="#000"/><rect x="10" y="9" width="1" height="1" fill="#fff"/><rect x="11" y="9" width="1" height="1" fill="#000"/><rect x="0" y="10" width="1" height="1" fill="#000"/><rect x="1" y="10" width="10" height="1" fill="#fff"/><rect x="11" y="10" width="1" height="1" fill="#000"/><rect x="0" y="11" width="1" height="1" fill="#000"/><rect x="1" y="11" width="1" height="1" fill="#fff"/><rect x="2" y="11" width="2" height="1" fill="#000"/><rect x="4" y="11" width="1" height="1" fill="#fff"/><rect x="5" y="11" width="5" height="1" fill="#000"/><rect x="10" y="11" width="1" height="1" fill="#fff"/><rect x="11" y="11" width="1" height="1" fill="#000"/><rect x="0" y="12" width="1" height="1" fill="#000"/><rect x="1" y="12" width="10" height="1" fill="#fff"/><rect x="11" y="12" width="1" height="1" fill="#000"/><rect x="0" y="13" width="12" height="1" fill="#000"/></svg>
<div class="t" style="left:45.60px;top:369px;font-size:15px;">Code</div>
<div class="a" style="left:41px;top:401px;height:1px;width:3px;background:repeating-linear-gradient(to right,#6a6a6a 0,#6a6a6a 1px,transparent 1px,transparent 2px)"></div>
<svg class="a" style="left:27px;top:398px" width="11" height="8"><path d="M1.2 1.6 L5.5 5.6 L9.8 1.6" stroke="#3c3c3c" stroke-width="1.7" fill="none"/></svg>
<svg class="a" style="left:45px;top:394px" width="14" height="12" shape-rendering="crispEdges"><rect x="0" y="0" width="14" height="1" fill="#00005a"/><rect x="0" y="1" width="14" height="1" fill="#00005a"/><rect x="0" y="2" width="1" height="1" fill="#000"/><rect x="1" y="2" width="12" height="1" fill="#fff"/><rect x="13" y="2" width="1" height="1" fill="#000"/><rect x="0" y="3" width="1" height="1" fill="#000"/><rect x="1" y="3" width="1" height="1" fill="#fff"/><rect x="2" y="3" width="4" height="1" fill="#505050"/><rect x="6" y="3" width="1" height="1" fill="#fff"/><rect x="7" y="3" width="2" height="1" fill="#505050"/><rect x="9" y="3" width="4" height="1" fill="#fff"/><rect x="13" y="3" width="1" height="1" fill="#000"/><rect x="0" y="4" width="1" height="1" fill="#000"/><rect x="1" y="4" width="12" height="1" fill="#fff"/><rect x="13" y="4" width="1" height="1" fill="#000"/><rect x="0" y="5" width="1" height="1" fill="#000"/><rect x="1" y="5" width="1" height="1" fill="#fff"/><rect x="2" y="5" width="3" height="1" fill="#505050"/><rect x="5" y="5" width="1" height="1" fill="#fff"/><rect x="6" y="5" width="2" height="1" fill="#505050"/><rect x="8" y="5" width="5" height="1" fill="#fff"/><rect x="13" y="5" width="1" height="1" fill="#000"/><rect x="0" y="6" width="1" height="1" fill="#000"/><rect x="1" y="6" width="12" height="1" fill="#fff"/><rect x="13" y="6" width="1" height="1" fill="#000"/><rect x="0" y="7" width="1" height="1" fill="#000"/><rect x="1" y="7" width="1" height="1" fill="#fff"/><rect x="2" y="7" width="3" height="1" fill="#505050"/><rect x="5" y="7" width="1" height="1" fill="#fff"/><rect x="6" y="7" width="2" height="1" fill="#505050"/><rect x="8" y="7" width="5" height="1" fill="#fff"/><rect x="13" y="7" width="1" height="1" fill="#000"/><rect x="0" y="8" width="1" height="1" fill="#000"/><rect x="1" y="8" width="12" height="1" fill="#fff"/><rect x="13" y="8" width="1" height="1" fill="#000"/><rect x="0" y="9" width="1" height="1" fill="#000"/><rect x="1" y="9" width="1" height="1" fill="#fff"/><rect x="2" y="9" width="4" height="1" fill="#505050"/><rect x="6" y="9" width="7" height="1" fill="#fff"/><rect x="13" y="9" width="1" height="1" fill="#000"/><rect x="0" y="10" width="1" height="1" fill="#000"/><rect x="1" y="10" width="12" height="1" fill="#fff"/><rect x="13" y="10" width="1" height="1" fill="#000"/><rect x="0" y="11" width="14" height="1" fill="#000"/></svg>
<div class="t" style="left:64.88px;top:391px;font-size:15px;transform:scaleX(1.0194);">Main</div>
<div class="a" style="left:54px;top:423px;height:1px;width:9px;background:repeating-linear-gradient(to right,#6a6a6a 0,#6a6a6a 1px,transparent 1px,transparent 2px)"></div>
<svg class="a" style="left:67px;top:417px" width="8" height="11" shape-rendering="crispEdges"><rect x="3" y="0" width="5" height="1" fill="#000"/><rect x="3" y="1" width="1" height="1" fill="#000"/><rect x="4" y="1" width="3" height="1" fill="#f2f048"/><rect x="7" y="1" width="1" height="1" fill="#000"/><rect x="2" y="2" width="1" height="1" fill="#000"/><rect x="3" y="2" width="3" height="1" fill="#f2f048"/><rect x="6" y="2" width="1" height="1" fill="#000"/><rect x="2" y="3" width="1" height="1" fill="#000"/><rect x="3" y="3" width="2" height="1" fill="#f2f048"/><rect x="5" y="3" width="2" height="1" fill="#000"/><rect x="1" y="4" width="1" height="1" fill="#000"/><rect x="2" y="4" width="3" height="1" fill="#f2f048"/><rect x="5" y="4" width="2" height="1" fill="#000"/><rect x="2" y="5" width="2" height="1" fill="#000"/><rect x="4" y="5" width="2" height="1" fill="#f2f048"/><rect x="6" y="5" width="1" height="1" fill="#000"/><rect x="2" y="6" width="1" height="1" fill="#000"/><rect x="3" y="6" width="2" height="1" fill="#f2f048"/><rect x="5" y="6" width="1" height="1" fill="#000"/><rect x="1" y="7" width="1" height="1" fill="#000"/><rect x="2" y="7" width="2" height="1" fill="#f2f048"/><rect x="4" y="7" width="1" height="1" fill="#000"/><rect x="1" y="8" width="1" height="1" fill="#000"/><rect x="2" y="8" width="1" height="1" fill="#f6f6b0"/><rect x="3" y="8" width="1" height="1" fill="#000"/><rect x="0" y="9" width="1" height="1" fill="#000"/><rect x="1" y="9" width="1" height="1" fill="#f6f6b0"/><rect x="2" y="9" width="1" height="1" fill="#000"/><rect x="0" y="10" width="2" height="1" fill="#000"/></svg>
<div class="t" style="left:84.06px;top:413px;font-size:15px;transform:scaleX(0.9430);">PictureViever1_UnknownEvent_9</div>
<div class="a" style="left:54px;top:445px;height:1px;width:9px;background:repeating-linear-gradient(to right,#6a6a6a 0,#6a6a6a 1px,transparent 1px,transparent 2px)"></div>
<svg class="a" style="left:67px;top:439px" width="8" height="11" shape-rendering="crispEdges"><rect x="3" y="0" width="5" height="1" fill="#000"/><rect x="3" y="1" width="1" height="1" fill="#000"/><rect x="4" y="1" width="3" height="1" fill="#f2f048"/><rect x="7" y="1" width="1" height="1" fill="#000"/><rect x="2" y="2" width="1" height="1" fill="#000"/><rect x="3" y="2" width="3" height="1" fill="#f2f048"/><rect x="6" y="2" width="1" height="1" fill="#000"/><rect x="2" y="3" width="1" height="1" fill="#000"/><rect x="3" y="3" width="2" height="1" fill="#f2f048"/><rect x="5" y="3" width="2" height="1" fill="#000"/><rect x="1" y="4" width="1" height="1" fill="#000"/><rect x="2" y="4" width="3" height="1" fill="#f2f048"/><rect x="5" y="4" width="2" height="1" fill="#000"/><rect x="2" y="5" width="2" height="1" fill="#000"/><rect x="4" y="5" width="2" height="1" fill="#f2f048"/><rect x="6" y="5" width="1" height="1" fill="#000"/><rect x="2" y="6" width="1" height="1" fill="#000"/><rect x="3" y="6" width="2" height="1" fill="#f2f048"/><rect x="5" y="6" width="1" height="1" fill="#000"/><rect x="1" y="7" width="1" height="1" fill="#000"/><rect x="2" y="7" width="2" height="1" fill="#f2f048"/><rect x="4" y="7" width="1" height="1" fill="#000"/><rect x="1" y="8" width="1" height="1" fill="#000"/><rect x="2" y="8" width="1" height="1" fill="#f6f6b0"/><rect x="3" y="8" width="1" height="1" fill="#000"/><rect x="0" y="9" width="1" height="1" fill="#000"/><rect x="1" y="9" width="1" height="1" fill="#f6f6b0"/><rect x="2" y="9" width="1" height="1" fill="#000"/><rect x="0" y="10" width="2" height="1" fill="#000"/></svg>
<div class="t" style="left:84.06px;top:435px;font-size:15px;transform:scaleX(0.9430);">PictureViever1_UnknownEvent_A</div>
<div class="a" style="left:54px;top:467px;height:1px;width:9px;background:repeating-linear-gradient(to right,#6a6a6a 0,#6a6a6a 1px,transparent 1px,transparent 2px)"></div>
<svg class="a" style="left:67px;top:461px" width="8" height="11" shape-rendering="crispEdges"><rect x="3" y="0" width="5" height="1" fill="#000"/><rect x="3" y="1" width="1" height="1" fill="#000"/><rect x="4" y="1" width="3" height="1" fill="#f2f048"/><rect x="7" y="1" width="1" height="1" fill="#000"/><rect x="2" y="2" width="1" height="1" fill="#000"/><rect x="3" y="2" width="3" height="1" fill="#f2f048"/><rect x="6" y="2" width="1" height="1" fill="#000"/><rect x="2" y="3" width="1" height="1" fill="#000"/><rect x="3" y="3" width="2" height="1" fill="#f2f048"/><rect x="5" y="3" width="2" height="1" fill="#000"/><rect x="1" y="4" width="1" height="1" fill="#000"/><rect x="2" y="4" width="3" height="1" fill="#f2f048"/><rect x="5" y="4" width="2" height="1" fill="#000"/><rect x="2" y="5" width="2" height="1" fill="#000"/><rect x="4" y="5" width="2" height="1" fill="#f2f048"/><rect x="6" y="5" width="1" height="1" fill="#000"/><rect x="2" y="6" width="1" height="1" fill="#000"/><rect x="3" y="6" width="2" height="1" fill="#f2f048"/><rect x="5" y="6" width="1" height="1" fill="#000"/><rect x="1" y="7" width="1" height="1" fill="#000"/><rect x="2" y="7" width="2" height="1" fill="#f2f048"/><rect x="4" y="7" width="1" height="1" fill="#000"/><rect x="1" y="8" width="1" height="1" fill="#000"/><rect x="2" y="8" width="1" height="1" fill="#f6f6b0"/><rect x="3" y="8" width="1" height="1" fill="#000"/><rect x="0" y="9" width="1" height="1" fill="#000"/><rect x="1" y="9" width="1" height="1" fill="#f6f6b0"/><rect x="2" y="9" width="1" height="1" fill="#000"/><rect x="0" y="10" width="2" height="1" fill="#000"/></svg>
<div class="t" style="left:83.76px;top:457px;font-size:15px;transform:scaleX(0.9444);">Form_Load_411290</div>
<div class="a" style="left:54px;top:489px;height:1px;width:9px;background:repeating-linear-gradient(to right,#6a6a6a 0,#6a6a6a 1px,transparent 1px,transparent 2px)"></div>
<svg class="a" style="left:67px;top:483px" width="8" height="11" shape-rendering="crispEdges"><rect x="3" y="0" width="5" height="1" fill="#000"/><rect x="3" y="1" width="1" height="1" fill="#000"/><rect x="4" y="1" width="3" height="1" fill="#f2f048"/><rect x="7" y="1" width="1" height="1" fill="#000"/><rect x="2" y="2" width="1" height="1" fill="#000"/><rect x="3" y="2" width="3" height="1" fill="#f2f048"/><rect x="6" y="2" width="1" height="1" fill="#000"/><rect x="2" y="3" width="1" height="1" fill="#000"/><rect x="3" y="3" width="2" height="1" fill="#f2f048"/><rect x="5" y="3" width="2" height="1" fill="#000"/><rect x="1" y="4" width="1" height="1" fill="#000"/><rect x="2" y="4" width="3" height="1" fill="#f2f048"/><rect x="5" y="4" width="2" height="1" fill="#000"/><rect x="2" y="5" width="2" height="1" fill="#000"/><rect x="4" y="5" width="2" height="1" fill="#f2f048"/><rect x="6" y="5" width="1" height="1" fill="#000"/><rect x="2" y="6" width="1" height="1" fill="#000"/><rect x="3" y="6" width="2" height="1" fill="#f2f048"/><rect x="5" y="6" width="1" height="1" fill="#000"/><rect x="1" y="7" width="1" height="1" fill="#000"/><rect x="2" y="7" width="2" height="1" fill="#f2f048"/><rect x="4" y="7" width="1" height="1" fill="#000"/><rect x="1" y="8" width="1" height="1" fill="#000"/><rect x="2" y="8" width="1" height="1" fill="#f6f6b0"/><rect x="3" y="8" width="1" height="1" fill="#000"/><rect x="0" y="9" width="1" height="1" fill="#000"/><rect x="1" y="9" width="1" height="1" fill="#f6f6b0"/><rect x="2" y="9" width="1" height="1" fill="#000"/><rect x="0" y="10" width="2" height="1" fill="#000"/></svg>
<div class="t" style="left:83.74px;top:479px;font-size:15px;transform:scaleX(0.9564);">Form_Activate_4104D0</div>
<div class="a" style="left:54px;top:511px;height:1px;width:9px;background:repeating-linear-gradient(to right,#6a6a6a 0,#6a6a6a 1px,transparent 1px,transparent 2px)"></div>
<svg class="a" style="left:67px;top:505px" width="8" height="11" shape-rendering="crispEdges"><rect x="3" y="0" width="5" height="1" fill="#000"/><rect x="3" y="1" width="1" height="1" fill="#000"/><rect x="4" y="1" width="3" height="1" fill="#f2f048"/><rect x="7" y="1" width="1" height="1" fill="#000"/><rect x="2" y="2" width="1" height="1" fill="#000"/><rect x="3" y="2" width="3" height="1" fill="#f2f048"/><rect x="6" y="2" width="1" height="1" fill="#000"/><rect x="2" y="3" width="1" height="1" fill="#000"/><rect x="3" y="3" width="2" height="1" fill="#f2f048"/><rect x="5" y="3" width="2" height="1" fill="#000"/><rect x="1" y="4" width="1" height="1" fill="#000"/><rect x="2" y="4" width="3" height="1" fill="#f2f048"/><rect x="5" y="4" width="2" height="1" fill="#000"/><rect x="2" y="5" width="2" height="1" fill="#000"/><rect x="4" y="5" width="2" height="1" fill="#f2f048"/><rect x="6" y="5" width="1" height="1" fill="#000"/><rect x="2" y="6" width="1" height="1" fill="#000"/><rect x="3" y="6" width="2" height="1" fill="#f2f048"/><rect x="5" y="6" width="1" height="1" fill="#000"/><rect x="1" y="7" width="1" height="1" fill="#000"/><rect x="2" y="7" width="2" height="1" fill="#f2f048"/><rect x="4" y="7" width="1" height="1" fill="#000"/><rect x="1" y="8" width="1" height="1" fill="#000"/><rect x="2" y="8" width="1" height="1" fill="#f6f6b0"/><rect x="3" y="8" width="1" height="1" fill="#000"/><rect x="0" y="9" width="1" height="1" fill="#000"/><rect x="1" y="9" width="1" height="1" fill="#f6f6b0"/><rect x="2" y="9" width="1" height="1" fill="#000"/><rect x="0" y="10" width="2" height="1" fill="#000"/></svg>
<div class="t" style="left:83.78px;top:501px;font-size:15px;transform:scaleX(0.9151);">Form_KeyPress_4109A0</div>
<div class="a" style="left:41px;top:533px;height:1px;width:3px;background:repeating-linear-gradient(to right,#6a6a6a 0,#6a6a6a 1px,transparent 1px,transparent 2px)"></div>
<svg class="a" style="left:30px;top:528px" width="8" height="11"><path d="M1.6 1.2 L5.6 5.5 L1.6 9.8" stroke="#a0a0a0" stroke-width="1.7" fill="none"/></svg>
<svg class="a" style="left:45px;top:526px" width="14" height="12" shape-rendering="crispEdges"><rect x="0" y="0" width="14" height="1" fill="#00005a"/><rect x="0" y="1" width="14" height="1" fill="#00005a"/><rect x="0" y="2" width="1" height="1" fill="#000"/><rect x="1" y="2" width="12" height="1" fill="#fff"/><rect x="13" y="2" width="1" height="1" fill="#000"/><rect x="0" y="3" width="1" height="1" fill="#000"/><rect x="1" y="3" width="1" height="1" fill="#fff"/><rect x="2" y="3" width="4" height="1" fill="#505050"/><rect x="6" y="3" width="1" height="1" fill="#fff"/><rect x="7" y="3" width="2" height="1" fill="#505050"/><rect x="9" y="3" width="4" height="1" fill="#fff"/><rect x="13" y="3" width="1" height="1" fill="#000"/><rect x="0" y="4" width="1" height="1" fill="#000"/><rect x="1" y="4" width="12" height="1" fill="#fff"/><rect x="13" y="4" width="1" height="1" fill="#000"/><rect x="0" y="5" width="1" height="1" fill="#000"/><rect x="1" y="5" width="1" height="1" fill="#fff"/><rect x="2" y="5" width="3" height="1" fill="#505050"/><rect x="5" y="5" width="1" height="1" fill="#fff"/><rect x="6" y="5" width="2" height="1" fill="#505050"/><rect x="8" y="5" width="5" height="1" fill="#fff"/><rect x="13" y="5" width="1" height="1" fill="#000"/><rect x="0" y="6" width="1" height="1" fill="#000"/><rect x="1" y="6" width="12" height="1" fill="#fff"/><rect x="13" y="6" width="1" height="1" fill="#000"/><rect x="0" y="7" width="1" height="1" fill="#000"/><rect x="1" y="7" width="1" height="1" fill="#fff"/><rect x="2" y="7" width="3" height="1" fill="#505050"/><rect x="5" y="7" width="1" height="1" fill="#fff"/><rect x="6" y="7" width="2" height="1" fill="#505050"/><rect x="8" y="7" width="5" height="1" fill="#fff"/><rect x="13" y="7" width="1" height="1" fill="#000"/><rect x="0" y="8" width="1" height="1" fill="#000"/><rect x="1" y="8" width="12" height="1" fill="#fff"/><rect x="13" y="8" width="1" height="1" fill="#000"/><rect x="0" y="9" width="1" height="1" fill="#000"/><rect x="1" y="9" width="1" height="1" fill="#fff"/><rect x="2" y="9" width="4" height="1" fill="#505050"/><rect x="6" y="9" width="7" height="1" fill="#fff"/><rect x="13" y="9" width="1" height="1" fill="#000"/><rect x="0" y="10" width="1" height="1" fill="#000"/><rect x="1" y="10" width="12" height="1" fill="#fff"/><rect x="13" y="10" width="1" height="1" fill="#000"/><rect x="0" y="11" width="14" height="1" fill="#000"/></svg>
<div class="t" style="left:65.70px;top:523px;font-size:15px;transform:scaleX(1.0216);">Alphablend</div>
<div class="a" style="left:41px;top:555px;height:1px;width:3px;background:repeating-linear-gradient(to right,#6a6a6a 0,#6a6a6a 1px,transparent 1px,transparent 2px)"></div>
<svg class="a" style="left:30px;top:550px" width="8" height="11"><path d="M1.6 1.2 L5.6 5.5 L1.6 9.8" stroke="#a0a0a0" stroke-width="1.7" fill="none"/></svg>
<svg class="a" style="left:45px;top:548px" width="14" height="12" shape-rendering="crispEdges"><rect x="0" y="0" width="14" height="1" fill="#00005a"/><rect x="0" y="1" width="14" height="1" fill="#00005a"/><rect x="0" y="2" width="1" height="1" fill="#000"/><rect x="1" y="2" width="12" height="1" fill="#fff"/><rect x="13" y="2" width="1" height="1" fill="#000"/><rect x="0" y="3" width="1" height="1" fill="#000"/><rect x="1" y="3" width="1" height="1" fill="#fff"/><rect x="2" y="3" width="4" height="1" fill="#505050"/><rect x="6" y="3" width="1" height="1" fill="#fff"/><rect x="7" y="3" width="2" height="1" fill="#505050"/><rect x="9" y="3" width="4" height="1" fill="#fff"/><rect x="13" y="3" width="1" height="1" fill="#000"/><rect x="0" y="4" width="1" height="1" fill="#000"/><rect x="1" y="4" width="12" height="1" fill="#fff"/><rect x="13" y="4" width="1" height="1" fill="#000"/><rect x="0" y="5" width="1" height="1" fill="#000"/><rect x="1" y="5" width="1" height="1" fill="#fff"/><rect x="2" y="5" width="3" height="1" fill="#505050"/><rect x="5" y="5" width="1" height="1" fill="#fff"/><rect x="6" y="5" width="2" height="1" fill="#505050"/><rect x="8" y="5" width="5" height="1" fill="#fff"/><rect x="13" y="5" width="1" height="1" fill="#000"/><rect x="0" y="6" width="1" height="1" fill="#000"/><rect x="1" y="6" width="12" height="1" fill="#fff"/><rect x="13" y="6" width="1" height="1" fill="#000"/><rect x="0" y="7" width="1" height="1" fill="#000"/><rect x="1" y="7" width="1" height="1" fill="#fff"/><rect x="2" y="7" width="3" height="1" fill="#505050"/><rect x="5" y="7" width="1" height="1" fill="#fff"/><rect x="6" y="7" width="2" height="1" fill="#505050"/><rect x="8" y="7" width="5" height="1" fill="#fff"/><rect x="13" y="7" width="1" height="1" fill="#000"/><rect x="0" y="8" width="1" height="1" fill="#000"/><rect x="1" y="8" width="12" height="1" fill="#fff"/><rect x="13" y="8" width="1" height="1" fill="#000"/><rect x="0" y="9" width="1" height="1" fill="#000"/><rect x="1" y="9" width="1" height="1" fill="#fff"/><rect x="2" y="9" width="4" height="1" fill="#505050"/><rect x="6" y="9" width="7" height="1" fill="#fff"/><rect x="13" y="9" width="1" height="1" fill="#000"/><rect x="0" y="10" width="1" height="1" fill="#000"/><rect x="1" y="10" width="12" height="1" fill="#fff"/><rect x="13" y="10" width="1" height="1" fill="#000"/><rect x="0" y="11" width="14" height="1" fill="#000"/></svg>
<div class="t" style="left:64.71px;top:545px;font-size:15px;transform:scaleX(0.9926);">clsASMpic</div>
<div class="a" style="left:41px;top:577px;height:1px;width:3px;background:repeating-linear-gradient(to right,#6a6a6a 0,#6a6a6a 1px,transparent 1px,transparent 2px)"></div>
<svg class="a" style="left:30px;top:572px" width="8" height="11"><path d="M1.6 1.2 L5.6 5.5 L1.6 9.8" stroke="#a0a0a0" stroke-width="1.7" fill="none"/></svg>
<svg class="a" style="left:45px;top:570px" width="14" height="12" shape-rendering="crispEdges"><rect x="0" y="0" width="14" height="1" fill="#00005a"/><rect x="0" y="1" width="14" height="1" fill="#00005a"/><rect x="0" y="2" width="1" height="1" fill="#000"/><rect x="1" y="2" width="12" height="1" fill="#fff"/><rect x="13" y="2" width="1" height="1" fill="#000"/><rect x="0" y="3" width="1" height="1" fill="#000"/><rect x="1" y="3" width="1" height="1" fill="#fff"/><rect x="2" y="3" width="4" height="1" fill="#505050"/><rect x="6" y="3" width="1" height="1" fill="#fff"/><rect x="7" y="3" width="2" height="1" fill="#505050"/><rect x="9" y="3" width="4" height="1" fill="#fff"/><rect x="13" y="3" width="1" height="1" fill="#000"/><rect x="0" y="4" width="1" height="1" fill="#000"/><rect x="1" y="4" width="12" height="1" fill="#fff"/><rect x="13" y="4" width="1" height="1" fill="#000"/><rect x="0" y="5" width="1" height="1" fill="#000"/><rect x="1" y="5" width="1" height="1" fill="#fff"/><rect x="2" y="5" width="3" height="1" fill="#505050"/><rect x="5" y="5" width="1" height="1" fill="#fff"/><rect x="6" y="5" width="2" height="1" fill="#505050"/><rect x="8" y="5" width="5" height="1" fill="#fff"/><rect x="13" y="5" width="1" height="1" fill="#000"/><rect x="0" y="6" width="1" height="1" fill="#000"/><rect x="1" y="6" width="12" height="1" fill="#fff"/><rect x="13" y="6" width="1" height="1" fill="#000"/><rect x="0" y="7" width="1" height="1" fill="#000"/><rect x="1" y="7" width="1" height="1" fill="#fff"/><rect x="2" y="7" width="3" height="1" fill="#505050"/><rect x="5" y="7" width="1" height="1" fill="#fff"/><rect x="6" y="7" width="2" height="1" fill="#505050"/><rect x="8" y="7" width="5" height="1" fill="#fff"/><rect x="13" y="7" width="1" height="1" fill="#000"/><rect x="0" y="8" width="1" height="1" fill="#000"/><rect x="1" y="8" width="12" height="1" fill="#fff"/><rect x="13" y="8" width="1" height="1" fill="#000"/><rect x="0" y="9" width="1" height="1" fill="#000"/><rect x="1" y="9" width="1" height="1" fill="#fff"/><rect x="2" y="9" width="4" height="1" fill="#505050"/><rect x="6" y="9" width="7" height="1" fill="#fff"/><rect x="13" y="9" width="1" height="1" fill="#000"/><rect x="0" y="10" width="1" height="1" fill="#000"/><rect x="1" y="10" width="12" height="1" fill="#fff"/><rect x="13" y="10" width="1" height="1" fill="#000"/><rect x="0" y="11" width="14" height="1" fill="#000"/></svg>
<div class="t" style="left:64.70px;top:567px;font-size:15px;transform:scaleX(0.9961);">MouseScrollApi</div>
<div class="a" style="left:41px;top:599px;height:1px;width:3px;background:repeating-linear-gradient(to right,#6a6a6a 0,#6a6a6a 1px,transparent 1px,transparent 2px)"></div>
<svg class="a" style="left:30px;top:594px" width="8" height="11"><path d="M1.6 1.2 L5.6 5.5 L1.6 9.8" stroke="#a0a0a0" stroke-width="1.7" fill="none"/></svg>
<svg class="a" style="left:45px;top:592px" width="14" height="12" shape-rendering="crispEdges"><rect x="0" y="0" width="14" height="1" fill="#00005a"/><rect x="0" y="1" width="14" height="1" fill="#00005a"/><rect x="0" y="2" width="1" height="1" fill="#000"/><rect x="1" y="2" width="12" height="1" fill="#fff"/><rect x="13" y="2" width="1" height="1" fill="#000"/><rect x="0" y="3" width="1" height="1" fill="#000"/><rect x="1" y="3" width="1" height="1" fill="#fff"/><rect x="2" y="3" width="4" height="1" fill="#505050"/><rect x="6" y="3" width="1" height="1" fill="#fff"/><rect x="7" y="3" width="2" height="1" fill="#505050"/><rect x="9" y="3" width="4" height="1" fill="#fff"/><rect x="13" y="3" width="1" height="1" fill="#000"/><rect x="0" y="4" width="1" height="1" fill="#000"/><rect x="1" y="4" width="12" height="1" fill="#fff"/><rect x="13" y="4" width="1" height="1" fill="#000"/><rect x="0" y="5" width="1" height="1" fill="#000"/><rect x="1" y="5" width="1" height="1" fill="#fff"/><rect x="2" y="5" width="3" height="1" fill="#505050"/><rect x="5" y="5" width="1" height="1" fill="#fff"/><rect x="6" y="5" width="2" height="1" fill="#505050"/><rect x="8" y="5" width="5" height="1" fill="#fff"/><rect x="13" y="5" width="1" height="1" fill="#000"/><rect x="0" y="6" width="1" height="1" fill="#000"/><rect x="1" y="6" width="12" height="1" fill="#fff"/><rect x="13" y="6" width="1" height="1" fill="#000"/><rect x="0" y="7" width="1" height="1" fill="#000"/><rect x="1" y="7" width="1" height="1" fill="#fff"/><rect x="2" y="7" width="3" height="1" fill="#505050"/><rect x="5" y="7" width="1" height="1" fill="#fff"/><rect x="6" y="7" width="2" height="1" fill="#505050"/><rect x="8" y="7" width="5" height="1" fill="#fff"/><rect x="13" y="7" width="1" height="1" fill="#000"/><rect x="0" y="8" width="1" height="1" fill="#000"/><rect x="1" y="8" width="12" height="1" fill="#fff"/><rect x="13" y="8" width="1" height="1" fill="#000"/><rect x="0" y="9" width="1" height="1" fill="#000"/><rect x="1" y="9" width="1" height="1" fill="#fff"/><rect x="2" y="9" width="4" height="1" fill="#505050"/><rect x="6" y="9" width="7" height="1" fill="#fff"/><rect x="13" y="9" width="1" height="1" fill="#000"/><rect x="0" y="10" width="1" height="1" fill="#000"/><rect x="1" y="10" width="12" height="1" fill="#fff"/><rect x="13" y="10" width="1" height="1" fill="#000"/><rect x="0" y="11" width="14" height="1" fill="#000"/></svg>
<div class="t" style="left:64.73px;top:589px;font-size:15px;transform:scaleX(0.9659);">PictureViever</div>
<div class="a" style="left:41px;top:621px;height:1px;width:3px;background:repeating-linear-gradient(to right,#6a6a6a 0,#6a6a6a 1px,transparent 1px,transparent 2px)"></div>
<svg class="a" style="left:30px;top:616px" width="8" height="11"><path d="M1.6 1.2 L5.6 5.5 L1.6 9.8" stroke="#a0a0a0" stroke-width="1.7" fill="none"/></svg>
<svg class="a" style="left:45px;top:614px" width="14" height="12" shape-rendering="crispEdges"><rect x="0" y="0" width="14" height="1" fill="#00005a"/><rect x="0" y="1" width="14" height="1" fill="#00005a"/><rect x="0" y="2" width="1" height="1" fill="#000"/><rect x="1" y="2" width="12" height="1" fill="#fff"/><rect x="13" y="2" width="1" height="1" fill="#000"/><rect x="0" y="3" width="1" height="1" fill="#000"/><rect x="1" y="3" width="1" height="1" fill="#fff"/><rect x="2" y="3" width="4" height="1" fill="#505050"/><rect x="6" y="3" width="1" height="1" fill="#fff"/><rect x="7" y="3" width="2" height="1" fill="#505050"/><rect x="9" y="3" width="4" height="1" fill="#fff"/><rect x="13" y="3" width="1" height="1" fill="#000"/><rect x="0" y="4" width="1" height="1" fill="#000"/><rect x="1" y="4" width="12" height="1" fill="#fff"/><rect x="13" y="4" width="1" height="1" fill="#000"/><rect x="0" y="5" width="1" height="1" fill="#000"/><rect x="1" y="5" width="1" height="1" fill="#fff"/><rect x="2" y="5" width="3" height="1" fill="#505050"/><rect x="5" y="5" width="1" height="1" fill="#fff"/><rect x="6" y="5" width="2" height="1" fill="#505050"/><rect x="8" y="5" width="5" height="1" fill="#fff"/><rect x="13" y="5" width="1" height="1" fill="#000"/><rect x="0" y="6" width="1" height="1" fill="#000"/><rect x="1" y="6" width="12" height="1" fill="#fff"/><rect x="13" y="6" width="1" height="1" fill="#000"/><rect x="0" y="7" width="1" height="1" fill="#000"/><rect x="1" y="7" width="1" height="1" fill="#fff"/><rect x="2" y="7" width="3" height="1" fill="#505050"/><rect x="5" y="7" width="1" height="1" fill="#fff"/><rect x="6" y="7" width="2" height="1" fill="#505050"/><rect x="8" y="7" width="5" height="1" fill="#fff"/><rect x="13" y="7" width="1" height="1" fill="#000"/><rect x="0" y="8" width="1" height="1" fill="#000"/><rect x="1" y="8" width="12" height="1" fill="#fff"/><rect x="13" y="8" width="1" height="1" fill="#000"/><rect x="0" y="9" width="1" height="1" fill="#000"/><rect x="1" y="9" width="1" height="1" fill="#fff"/><rect x="2" y="9" width="4" height="1" fill="#505050"/><rect x="6" y="9" width="7" height="1" fill="#fff"/><rect x="13" y="9" width="1" height="1" fill="#000"/><rect x="0" y="10" width="1" height="1" fill="#000"/><rect x="1" y="10" width="12" height="1" fill="#fff"/><rect x="13" y="10" width="1" height="1" fill="#000"/><rect x="0" y="11" width="14" height="1" fill="#000"/></svg>
<div class="t" style="left:64.66px;top:611px;font-size:15px;transform:scaleX(1.0366);">Поиск</div>
<div class="a" style="left:41px;top:643px;height:1px;width:3px;background:repeating-linear-gradient(to right,#6a6a6a 0,#6a6a6a 1px,transparent 1px,transparent 2px)"></div>
<svg class="a" style="left:30px;top:638px" width="8" height="11"><path d="M1.6 1.2 L5.6 5.5 L1.6 9.8" stroke="#a0a0a0" stroke-width="1.7" fill="none"/></svg>
<svg class="a" style="left:45px;top:636px" width="14" height="12" shape-rendering="crispEdges"><rect x="0" y="0" width="14" height="1" fill="#00005a"/><rect x="0" y="1" width="14" height="1" fill="#00005a"/><rect x="0" y="2" width="1" height="1" fill="#000"/><rect x="1" y="2" width="12" height="1" fill="#fff"/><rect x="13" y="2" width="1" height="1" fill="#000"/><rect x="0" y="3" width="1" height="1" fill="#000"/><rect x="1" y="3" width="1" height="1" fill="#fff"/><rect x="2" y="3" width="4" height="1" fill="#505050"/><rect x="6" y="3" width="1" height="1" fill="#fff"/><rect x="7" y="3" width="2" height="1" fill="#505050"/><rect x="9" y="3" width="4" height="1" fill="#fff"/><rect x="13" y="3" width="1" height="1" fill="#000"/><rect x="0" y="4" width="1" height="1" fill="#000"/><rect x="1" y="4" width="12" height="1" fill="#fff"/><rect x="13" y="4" width="1" height="1" fill="#000"/><rect x="0" y="5" width="1" height="1" fill="#000"/><rect x="1" y="5" width="1" height="1" fill="#fff"/><rect x="2" y="5" width="3" height="1" fill="#505050"/><rect x="5" y="5" width="1" height="1" fill="#fff"/><rect x="6" y="5" width="2" height="1" fill="#505050"/><rect x="8" y="5" width="5" height="1" fill="#fff"/><rect x="13" y="5" width="1" height="1" fill="#000"/><rect x="0" y="6" width="1" height="1" fill="#000"/><rect x="1" y="6" width="12" height="1" fill="#fff"/><rect x="13" y="6" width="1" height="1" fill="#000"/><rect x="0" y="7" width="1" height="1" fill="#000"/><rect x="1" y="7" width="1" height="1" fill="#fff"/><rect x="2" y="7" width="3" height="1" fill="#505050"/><rect x="5" y="7" width="1" height="1" fill="#fff"/><rect x="6" y="7" width="2" height="1" fill="#505050"/><rect x="8" y="7" width="5" height="1" fill="#fff"/><rect x="13" y="7" width="1" height="1" fill="#000"/><rect x="0" y="8" width="1" height="1" fill="#000"/><rect x="1" y="8" width="12" height="1" fill="#fff"/><rect x="13" y="8" width="1" height="1" fill="#000"/><rect x="0" y="9" width="1" height="1" fill="#000"/><rect x="1" y="9" width="1" height="1" fill="#fff"/><rect x="2" y="9" width="4" height="1" fill="#505050"/><rect x="6" y="9" width="7" height="1" fill="#fff"/><rect x="13" y="9" width="1" height="1" fill="#000"/><rect x="0" y="10" width="1" height="1" fill="#000"/><rect x="1" y="10" width="12" height="1" fill="#fff"/><rect x="13" y="10" width="1" height="1" fill="#000"/><rect x="0" y="11" width="14" height="1" fill="#000"/></svg>
<div class="t" style="left:64.77px;top:633px;font-size:15px;transform:scaleX(0.9281);">Password</div>
<div class="a" style="left:41px;top:665px;height:1px;width:3px;background:repeating-linear-gradient(to right,#6a6a6a 0,#6a6a6a 1px,transparent 1px,transparent 2px)"></div>
<svg class="a" style="left:30px;top:660px" width="8" height="11"><path d="M1.6 1.2 L5.6 5.5 L1.6 9.8" stroke="#a0a0a0" stroke-width="1.7" fill="none"/></svg>
<svg class="a" style="left:45px;top:658px" width="14" height="12" shape-rendering="crispEdges"><rect x="0" y="0" width="14" height="1" fill="#00005a"/><rect x="0" y="1" width="14" height="1" fill="#00005a"/><rect x="0" y="2" width="1" height="1" fill="#000"/><rect x="1" y="2" width="12" height="1" fill="#fff"/><rect x="13" y="2" width="1" height="1" fill="#000"/><rect x="0" y="3" width="1" height="1" fill="#000"/><rect x="1" y="3" width="1" height="1" fill="#fff"/><rect x="2" y="3" width="4" height="1" fill="#505050"/><rect x="6" y="3" width="1" height="1" fill="#fff"/><rect x="7" y="3" width="2" height="1" fill="#505050"/><rect x="9" y="3" width="4" height="1" fill="#fff"/><rect x="13" y="3" width="1" height="1" fill="#000"/><rect x="0" y="4" width="1" height="1" fill="#000"/><rect x="1" y="4" width="12" height="1" fill="#fff"/><rect x="13" y="4" width="1" height="1" fill="#000"/><rect x="0" y="5" width="1" height="1" fill="#000"/><rect x="1" y="5" width="1" height="1" fill="#fff"/><rect x="2" y="5" width="3" height="1" fill="#505050"/><rect x="5" y="5" width="1" height="1" fill="#fff"/><rect x="6" y="5" width="2" height="1" fill="#505050"/><rect x="8" y="5" width="5" height="1" fill="#fff"/><rect x="13" y="5" width="1" height="1" fill="#000"/><rect x="0" y="6" width="1" height="1" fill="#000"/><rect x="1" y="6" width="12" height="1" fill="#fff"/><rect x="13" y="6" width="1" height="1" fill="#000"/><rect x="0" y="7" width="1" height="1" fill="#000"/><rect x="1" y="7" width="1" height="1" fill="#fff"/><rect x="2" y="7" width="3" height="1" fill="#505050"/><rect x="5" y="7" width="1" height="1" fill="#fff"/><rect x="6" y="7" width="2" height="1" fill="#505050"/><rect x="8" y="7" width="5" height="1" fill="#fff"/><rect x="13" y="7" width="1" height="1" fill="#000"/><rect x="0" y="8" width="1" height="1" fill="#000"/><rect x="1" y="8" width="12" height="1" fill="#fff"/><rect x="13" y="8" width="1" height="1" fill="#000"/><rect x="0" y="9" width="1" height="1" fill="#000"/><rect x="1" y="9" width="1" height="1" fill="#fff"/><rect x="2" y="9" width="4" height="1" fill="#505050"/><rect x="6" y="9" width="7" height="1" fill="#fff"/><rect x="13" y="9" width="1" height="1" fill="#000"/><rect x="0" y="10" width="1" height="1" fill="#000"/><rect x="1" y="10" width="12" height="1" fill="#fff"/><rect x="13" y="10" width="1" height="1" fill="#000"/><rect x="0" y="11" width="14" height="1" fill="#000"/></svg>
<div class="t" style="left:64.78px;top:655px;font-size:15px;transform:scaleX(0.9239);">Search</div>
<div class="a" style="left:35px;top:687px;height:1px;width:9px;background:repeating-linear-gradient(to right,#6a6a6a 0,#6a6a6a 1px,transparent 1px,transparent 2px)"></div>
<svg class="a" style="left:45px;top:679px" width="15" height="15" shape-rendering="crispEdges"><rect x="1" y="0" width="14" height="1" fill="#00005a"/><rect x="1" y="1" width="14" height="1" fill="#00005a"/><rect x="1" y="2" width="1" height="1" fill="#000"/><rect x="2" y="2" width="12" height="1" fill="#fff"/><rect x="14" y="2" width="1" height="1" fill="#000"/><rect x="0" y="3" width="4" height="1" fill="#000"/><rect x="4" y="3" width="3" height="1" fill="#505050"/><rect x="7" y="3" width="1" height="1" fill="#fff"/><rect x="8" y="3" width="2" height="1" fill="#505050"/><rect x="10" y="3" width="4" height="1" fill="#fff"/><rect x="14" y="3" width="1" height="1" fill="#000"/><rect x="0" y="4" width="1" height="1" fill="#000"/><rect x="1" y="4" width="2" height="1" fill="#ece888"/><rect x="3" y="4" width="1" height="1" fill="#000"/><rect x="4" y="4" width="10" height="1" fill="#fff"/><rect x="14" y="4" width="1" height="1" fill="#000"/><rect x="0" y="5" width="1" height="1" fill="#000"/><rect x="1" y="5" width="2" height="1" fill="#ece888"/><rect x="3" y="5" width="1" height="1" fill="#000"/><rect x="4" y="5" width="2" height="1" fill="#505050"/><rect x="6" y="5" width="1" height="1" fill="#fff"/><rect x="7" y="5" width="2" height="1" fill="#505050"/><rect x="9" y="5" width="5" height="1" fill="#fff"/><rect x="14" y="5" width="1" height="1" fill="#000"/><rect x="0" y="6" width="1" height="1" fill="#000"/><rect x="1" y="6" width="2" height="1" fill="#ece888"/><rect x="3" y="6" width="1" height="1" fill="#000"/><rect x="4" y="6" width="10" height="1" fill="#fff"/><rect x="14" y="6" width="1" height="1" fill="#000"/><rect x="0" y="7" width="1" height="1" fill="#000"/><rect x="1" y="7" width="2" height="1" fill="#ece888"/><rect x="3" y="7" width="1" height="1" fill="#000"/><rect x="4" y="7" width="2" height="1" fill="#505050"/><rect x="6" y="7" width="1" height="1" fill="#fff"/><rect x="7" y="7" width="2" height="1" fill="#505050"/><rect x="9" y="7" width="5" height="1" fill="#fff"/><rect x="14" y="7" width="1" height="1" fill="#000"/><rect x="0" y="8" width="1" height="1" fill="#000"/><rect x="1" y="8" width="2" height="1" fill="#ece888"/><rect x="3" y="8" width="1" height="1" fill="#000"/><rect x="4" y="8" width="10" height="1" fill="#fff"/><rect x="14" y="8" width="1" height="1" fill="#000"/><rect x="1" y="9" width="2" height="1" fill="#000"/><rect x="3" y="9" width="3" height="1" fill="#505050"/><rect x="6" y="9" width="8" height="1" fill="#fff"/><rect x="14" y="9" width="1" height="1" fill="#000"/><rect x="1" y="10" width="1" height="1" fill="#000"/><rect x="2" y="10" width="12" height="1" fill="#fff"/><rect x="14" y="10" width="1" height="1" fill="#000"/><rect x="0" y="11" width="15" height="1" fill="#000"/><rect x="0" y="12" width="1" height="1" fill="#000"/><rect x="1" y="12" width="2" height="1" fill="#fff"/><rect x="3" y="12" width="1" height="1" fill="#000"/><rect x="0" y="13" width="1" height="1" fill="#000"/><rect x="1" y="13" width="2" height="1" fill="#fff"/><rect x="3" y="13" width="1" height="1" fill="#000"/><rect x="1" y="14" width="2" height="1" fill="#000"/></svg>
<div class="t" style="left:65.70px;top:677px;font-size:15px;transform:scaleX(0.9087);">API</div>
<div class="a" style="left:3px;top:843px;width:289px;height:20px;background:#f0f0f0"></div>
<div class="a" style="left:24px;top:843px;width:202px;height:20px;background:#cdcdcd"></div>
<svg class="a" style="left:8px;top:846px" width="11" height="13"><path d="M8.00 2.50 L2.00 6.50 L8.00 10.50" stroke="#585858" stroke-width="2.4" fill="none"/></svg>
<svg class="a" style="left:276px;top:846px" width="11" height="13"><path d="M2.50 2.50 L8.50 6.50 L2.50 10.50" stroke="#585858" stroke-width="2.4" fill="none"/></svg>
<div class="a" style="left:292px;top:190px;width:1px;height:653px;background:#fff"></div>
<div class="a" style="left:293px;top:189px;width:1px;height:676px;background:#828282"></div>
<div class="a" style="left:1px;top:864px;width:293px;height:1px;background:#8a8a8a"></div>
<div class="a" style="left:294px;top:190px;width:5px;height:676px;background:#f0f0f0;border-left:1px solid #f8f8f8;box-sizing:border-box"></div>
<div class="a" style="left:294px;top:866px;width:889px;height:1px;background:#dcdcdc"></div>
<div class="a" style="left:299px;top:190px;width:881px;height:675px;background:#fff;border-left:1px solid #dadada;border-right:1px solid #dadada;border-bottom:1px solid #dadada;box-sizing:border-box"></div>
<div class="a" style="left:383px;top:190px;width:797px;height:25px;background:#f0f0f0;border-top:1px solid #fff;box-sizing:border-box"></div>
<div class="a" style="left:383px;top:214px;width:796px;height:1px;background:#d9d9d9"></div>
<div class="t" style="left:306.57px;top:193px;font-size:13px;transform:scaleX(1.0277);">Decompiler</div>
<div class="a" style="left:382px;top:190px;width:89px;height:24px;background:#f2f2f2;border:1px solid #dadada;border-top:2px solid #fff;border-bottom:none;box-sizing:border-box"></div>
<div class="t" style="left:386.81px;top:195px;font-size:13px;transform:scaleX(0.9872);">Disassembler</div>
<div class="a" style="left:470px;top:190px;width:76px;height:24px;background:#f2f2f2;border:1px solid #dadada;border-top:2px solid #fff;border-bottom:none;box-sizing:border-box"></div>
<div class="t" style="left:476.69px;top:195px;font-size:13px;transform:scaleX(1.0111);">HEX Editor</div>
<div class="a" style="left:1179px;top:190px;width:1px;height:25px;background:#f0f0f0"></div>
<div class="a" style="left:1179px;top:190px;width:4px;height:1px;background:#fff"></div>
<div class="a" style="left:303px;top:218px;width:3px;height:623px;background:#f0f0f0"></div>
<div class="a" style="left:306px;top:218px;width:1px;height:623px;background:#808080"></div>
<div class="a" style="left:307px;top:218px;width:14px;height:623px;background:#e3e3e3"></div>
<div class="a" style="left:321px;top:218px;width:1px;height:623px;background:#f0f0f0"></div>
<div class="a" style="left:315px;top:237px;width:1px;height:604px;background:#707070"></div>
<svg class="a" style="left:309px;top:222px" width="13" height="13" viewBox="0 0 13 13"><circle cx="6.5" cy="5.5" r="5" fill="#fff" stroke="#707070"/><path d="M3.5 5.5 H9.5" stroke="#505050"/></svg>
<svg class="a" style="left:309px;top:402px" width="13" height="13" viewBox="0 0 13 13"><circle cx="6.5" cy="5.5" r="5" fill="#fff" stroke="#707070"/><path d="M3.5 5.5 H9.5" stroke="#505050"/></svg>
<svg class="a" style="left:309px;top:702px" width="13" height="13" viewBox="0 0 13 13"><circle cx="6.5" cy="5.5" r="5" fill="#fff" stroke="#707070"/><path d="M3.5 5.5 H9.5" stroke="#505050"/></svg>
<div class="a" style="left:315px;top:648px;width:6px;height:1px;background:#707070"></div>
<div class="a" style="left:315px;top:748px;width:6px;height:1px;background:#707070"></div>
<div class="a" style="left:321px;top:218px;width:835px;height:623px;overflow:hidden">
<div id="code" style="left:4px;top:1px"><b>Private Sub</b> Form_Load() <i>'411290</i>
  loc_004112F5: <b>On Error Resume Next</b>
  loc_004113DC: var_BC = Password.Show <i>1</i><u>,</u> var_90
  loc_00411422: var_8C = global_00405338
  loc_0041148A: var_54 = GetSetting(<i>"PictureVIEWER"</i><u>,</u> <i>"Path"</i><u>,</u> <i>"Count"</i><u>,</u> global_00405338)
  loc_00411497: var_8C = global_00405338
  loc_004114C1: <b>If</b> (var_54 <u>&lt;&gt;</u> global_00405338) <b>Then</b>
  loc_004114E9:   var_34 = <b>CByte</b>(<b>Val</b>(<b>CStr</b>(var_54)))
  loc_00411513:   var_9C = var_34
  loc_0041155E:   <b>For</b> var_30 = <i>1</i> <b>To</b> var_34 <b>Step</b> <i>1</i>
  loc_00411564:     var_FC = var_E4
  loc_0041156A:     <b>GoTo</b> loc_004117FC
  loc_004115BD:     var_8C = global_00405338
  loc_0041162F:     var_44 = GetSetting(<i>"PictureVIEWER"</i><u>,</u> <i>"Path"</i><u>,</u> <b>CStr</b>(<i>"Path"</i> <u>&amp;</u> <b>Str</b><i>$</i>(var_58)))
  loc_00411645:     var_8C = <i>"SHS.ShackS"</i>
  loc_00411687:     <b>Open</b> var_44 + <i>"SHS.ShackS"</i> <b>For</b> Binary <b>As</b> <i>#1</i> <b>Len</b> = <i>-1</i>
  loc_004116AE:     <b>Get</b> <i>#1</i><u>,</u> var_58
  loc_004116BD:     <b>Close</b> <i>#1</i>
  loc_004116DF:     var_5C = <b>Chr</b><i>$((</i>var_58 <b>And</b> <i>255))</i>
  loc_0041174B:     var_8C = var_5C
  loc_00411785:     var_BC = Collection.Add var_44<u>,</u> var_5C<u>,</u> var_74<u>,</u> var_84
  loc_004117F0:   <b>Next</b> var_30
  loc_004117F6:   var_FC = <b>Next</b> var_30
  loc_004117FC:   <i>'Referenced from: 0041156A</i>
  loc_00411803:   <b>If</b> var_FC <u>&lt;&gt;</u> <i>0</i> <b>Then GoTo</b> loc_0041156F
  loc_00411809:   <b>GoTo</b> loc_0041192E
  loc_0041180E: <b>End If</b>
  loc_004118EF: var_BC = Search.Show <i>1</i><u>,</u> var_90
  loc_0041194F: var_C0 = UnkVCall[Me.000002FCh]
  loc_004119BA: var_84 = Collection.Item<i>(1)</i>
  loc_004119BF: var_BC = var_84</div>
</div>
<div class="a" style="left:1156px;top:218px;width:20px;height:623px;background:#f0f0f0"></div>
<div class="a" style="left:1156px;top:239px;width:19px;height:487px;background:#cdcdcd"></div>
<svg class="a" style="left:1159px;top:224px" width="14" height="10"><path d="M2.50 7.50 L6.80 2.00 L11.20 7.50" stroke="#585858" stroke-width="2.4" fill="none"/></svg>
<svg class="a" style="left:1159px;top:824px" width="14" height="11"><path d="M2.50 2.80 L6.80 8.30 L11.20 2.80" stroke="#585858" stroke-width="2.4" fill="none"/></svg>
<div class="a" style="left:303px;top:842px;width:853px;height:20px;background:#f0f0f0"></div>
<div class="a" style="left:324px;top:842px;width:66px;height:20px;background:#cdcdcd"></div>
<svg class="a" style="left:307px;top:845px" width="11" height="13"><path d="M8.50 2.50 L2.80 6.50 L8.50 10.50" stroke="#585858" stroke-width="2.4" fill="none"/></svg>
<svg class="a" style="left:1138px;top:845px" width="11" height="13"><path d="M2.50 2.50 L8.50 6.50 L2.50 10.50" stroke="#585858" stroke-width="2.4" fill="none"/></svg>
<div class="a" style="left:1156px;top:842px;width:20px;height:20px;background:#f0f0f0"></div>
<div class="t" style="left:2.99px;top:869px;font-size:15px;transform:scaleX(1.0087);">Decompiled OK</div>
<div class="a" style="left:1180px;top:877px;width:2px;height:2px;background:#a8a8a8"></div>
<div class="a" style="left:1176px;top:881px;width:2px;height:2px;background:#a8a8a8"></div>
<div class="a" style="left:1180px;top:881px;width:2px;height:2px;background:#a8a8a8"></div>
<div class="a" style="left:1172px;top:885px;width:2px;height:2px;background:#a8a8a8"></div>
<div class="a" style="left:1176px;top:885px;width:2px;height:2px;background:#a8a8a8"></div>
<div class="a" style="left:1180px;top:885px;width:2px;height:2px;background:#a8a8a8"></div>
<div class="a" style="left:0;top:0;width:1185px;height:890px;border:1px solid #111;box-sizing:border-box"></div>
<div class="a" style="left:1183px;top:1px;width:1px;height:888px;background:#7a7a7a"></div>
</body></html>
